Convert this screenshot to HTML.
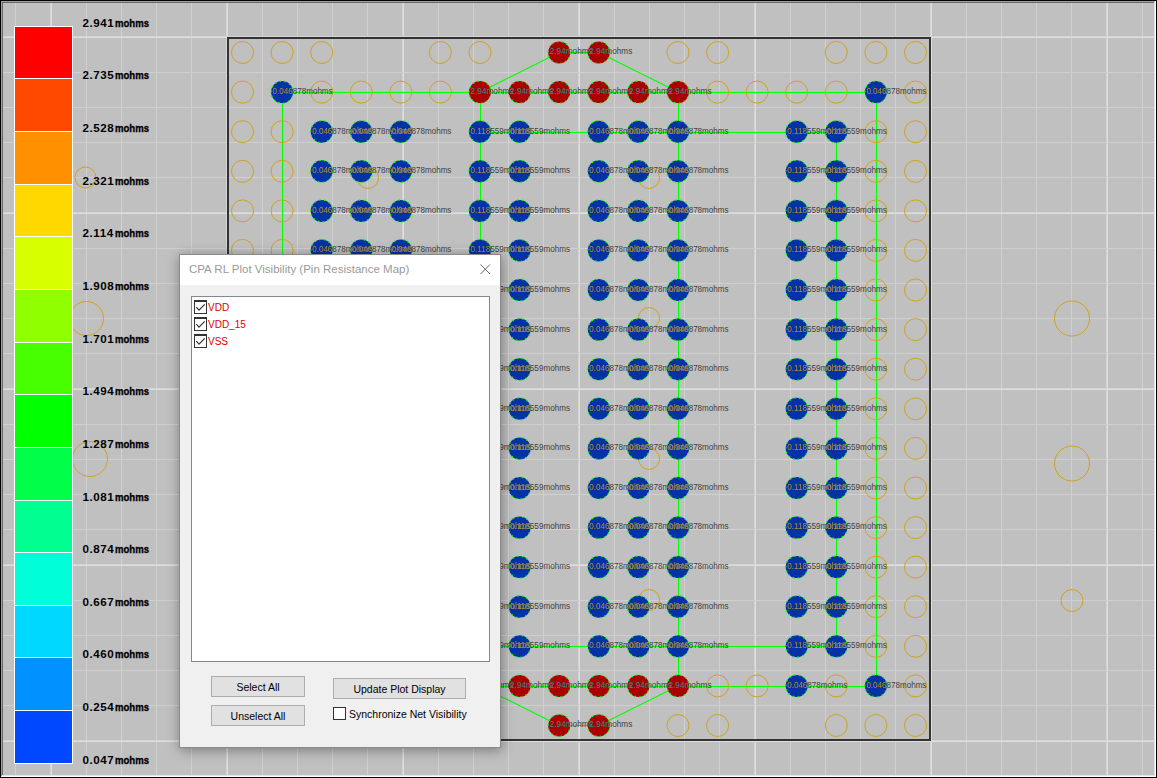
<!DOCTYPE html><html><head><meta charset="utf-8"><style>
html,body{margin:0;padding:0;width:1157px;height:778px;overflow:hidden;background:#c0c0c0}
#dlg{position:absolute;left:179px;top:254px;width:320px;height:492px;border:1px solid #8a8a8a;background:#f0f0f0;box-shadow:1px 2px 12px rgba(0,0,0,0.38);font-family:"Liberation Sans",sans-serif}
#dlg .title{position:absolute;left:0;top:0;width:320px;height:30px;background:#fff;color:#9a9a9a;font-size:11.5px;line-height:28px;padding-left:9px;box-sizing:border-box;white-space:nowrap}
#dlg .x{position:absolute;left:300px;top:9px}
#dlg .list{position:absolute;left:11px;top:41px;width:299px;height:366px;background:#fff;border:1px solid #828790;box-sizing:border-box}
#dlg .item{position:absolute;left:2px;height:14px}
#dlg .cb{position:absolute;left:0;top:0;width:11px;height:11px;border:1px solid #333;border-top-width:2px;background:#fff}
#dlg .cb svg{position:absolute;left:-1px;top:-2px}
#dlg .lbl{position:absolute;left:14px;top:2px;color:#e00000;font-size:10px;white-space:nowrap}
#dlg .btn{position:absolute;background:#e1e1e1;border:1px solid #adadad;font-size:10.5px;color:#000;text-align:center;line-height:20px;white-space:nowrap}
#dlg .cb2{position:absolute;left:153px;top:452px;width:11px;height:11px;border:1px solid #333;background:#fff}
#dlg .sync{position:absolute;left:169px;top:453px;font-size:10.5px;color:#000;white-space:nowrap}
</style></head><body>
<svg width="1157" height="778" viewBox="0 0 1157 778" style="position:absolute;left:0;top:0">
<defs><clipPath id="cb"><circle cx="282.1" cy="92.1" r="11"/><circle cx="875.9" cy="92.1" r="11"/><circle cx="321.7" cy="131.7" r="11"/><circle cx="361.3" cy="131.7" r="11"/><circle cx="400.9" cy="131.7" r="11"/><circle cx="480.0" cy="131.7" r="11"/><circle cx="519.6" cy="131.7" r="11"/><circle cx="598.8" cy="131.7" r="11"/><circle cx="638.4" cy="131.7" r="11"/><circle cx="678.0" cy="131.7" r="11"/><circle cx="796.7" cy="131.7" r="11"/><circle cx="836.3" cy="131.7" r="11"/><circle cx="321.7" cy="171.3" r="11"/><circle cx="361.3" cy="171.3" r="11"/><circle cx="400.9" cy="171.3" r="11"/><circle cx="480.0" cy="171.3" r="11"/><circle cx="519.6" cy="171.3" r="11"/><circle cx="598.8" cy="171.3" r="11"/><circle cx="638.4" cy="171.3" r="11"/><circle cx="678.0" cy="171.3" r="11"/><circle cx="796.7" cy="171.3" r="11"/><circle cx="836.3" cy="171.3" r="11"/><circle cx="321.7" cy="210.9" r="11"/><circle cx="361.3" cy="210.9" r="11"/><circle cx="400.9" cy="210.9" r="11"/><circle cx="480.0" cy="210.9" r="11"/><circle cx="519.6" cy="210.9" r="11"/><circle cx="598.8" cy="210.9" r="11"/><circle cx="638.4" cy="210.9" r="11"/><circle cx="678.0" cy="210.9" r="11"/><circle cx="796.7" cy="210.9" r="11"/><circle cx="836.3" cy="210.9" r="11"/><circle cx="321.7" cy="250.4" r="11"/><circle cx="361.3" cy="250.4" r="11"/><circle cx="400.9" cy="250.4" r="11"/><circle cx="480.0" cy="250.4" r="11"/><circle cx="519.6" cy="250.4" r="11"/><circle cx="598.8" cy="250.4" r="11"/><circle cx="638.4" cy="250.4" r="11"/><circle cx="678.0" cy="250.4" r="11"/><circle cx="796.7" cy="250.4" r="11"/><circle cx="836.3" cy="250.4" r="11"/><circle cx="321.7" cy="290.0" r="11"/><circle cx="361.3" cy="290.0" r="11"/><circle cx="400.9" cy="290.0" r="11"/><circle cx="480.0" cy="290.0" r="11"/><circle cx="519.6" cy="290.0" r="11"/><circle cx="598.8" cy="290.0" r="11"/><circle cx="638.4" cy="290.0" r="11"/><circle cx="678.0" cy="290.0" r="11"/><circle cx="796.7" cy="290.0" r="11"/><circle cx="836.3" cy="290.0" r="11"/><circle cx="321.7" cy="329.6" r="11"/><circle cx="361.3" cy="329.6" r="11"/><circle cx="400.9" cy="329.6" r="11"/><circle cx="480.0" cy="329.6" r="11"/><circle cx="519.6" cy="329.6" r="11"/><circle cx="598.8" cy="329.6" r="11"/><circle cx="638.4" cy="329.6" r="11"/><circle cx="678.0" cy="329.6" r="11"/><circle cx="796.7" cy="329.6" r="11"/><circle cx="836.3" cy="329.6" r="11"/><circle cx="321.7" cy="369.2" r="11"/><circle cx="361.3" cy="369.2" r="11"/><circle cx="400.9" cy="369.2" r="11"/><circle cx="480.0" cy="369.2" r="11"/><circle cx="519.6" cy="369.2" r="11"/><circle cx="598.8" cy="369.2" r="11"/><circle cx="638.4" cy="369.2" r="11"/><circle cx="678.0" cy="369.2" r="11"/><circle cx="796.7" cy="369.2" r="11"/><circle cx="836.3" cy="369.2" r="11"/><circle cx="321.7" cy="408.8" r="11"/><circle cx="361.3" cy="408.8" r="11"/><circle cx="400.9" cy="408.8" r="11"/><circle cx="480.0" cy="408.8" r="11"/><circle cx="519.6" cy="408.8" r="11"/><circle cx="598.8" cy="408.8" r="11"/><circle cx="638.4" cy="408.8" r="11"/><circle cx="678.0" cy="408.8" r="11"/><circle cx="796.7" cy="408.8" r="11"/><circle cx="836.3" cy="408.8" r="11"/><circle cx="321.7" cy="448.4" r="11"/><circle cx="361.3" cy="448.4" r="11"/><circle cx="400.9" cy="448.4" r="11"/><circle cx="480.0" cy="448.4" r="11"/><circle cx="519.6" cy="448.4" r="11"/><circle cx="598.8" cy="448.4" r="11"/><circle cx="638.4" cy="448.4" r="11"/><circle cx="678.0" cy="448.4" r="11"/><circle cx="796.7" cy="448.4" r="11"/><circle cx="836.3" cy="448.4" r="11"/><circle cx="321.7" cy="488.0" r="11"/><circle cx="361.3" cy="488.0" r="11"/><circle cx="400.9" cy="488.0" r="11"/><circle cx="480.0" cy="488.0" r="11"/><circle cx="519.6" cy="488.0" r="11"/><circle cx="598.8" cy="488.0" r="11"/><circle cx="638.4" cy="488.0" r="11"/><circle cx="678.0" cy="488.0" r="11"/><circle cx="796.7" cy="488.0" r="11"/><circle cx="836.3" cy="488.0" r="11"/><circle cx="321.7" cy="527.6" r="11"/><circle cx="361.3" cy="527.6" r="11"/><circle cx="400.9" cy="527.6" r="11"/><circle cx="480.0" cy="527.6" r="11"/><circle cx="519.6" cy="527.6" r="11"/><circle cx="598.8" cy="527.6" r="11"/><circle cx="638.4" cy="527.6" r="11"/><circle cx="678.0" cy="527.6" r="11"/><circle cx="796.7" cy="527.6" r="11"/><circle cx="836.3" cy="527.6" r="11"/><circle cx="321.7" cy="567.1" r="11"/><circle cx="361.3" cy="567.1" r="11"/><circle cx="400.9" cy="567.1" r="11"/><circle cx="480.0" cy="567.1" r="11"/><circle cx="519.6" cy="567.1" r="11"/><circle cx="598.8" cy="567.1" r="11"/><circle cx="638.4" cy="567.1" r="11"/><circle cx="678.0" cy="567.1" r="11"/><circle cx="796.7" cy="567.1" r="11"/><circle cx="836.3" cy="567.1" r="11"/><circle cx="321.7" cy="606.7" r="11"/><circle cx="361.3" cy="606.7" r="11"/><circle cx="400.9" cy="606.7" r="11"/><circle cx="480.0" cy="606.7" r="11"/><circle cx="519.6" cy="606.7" r="11"/><circle cx="598.8" cy="606.7" r="11"/><circle cx="638.4" cy="606.7" r="11"/><circle cx="678.0" cy="606.7" r="11"/><circle cx="796.7" cy="606.7" r="11"/><circle cx="836.3" cy="606.7" r="11"/><circle cx="321.7" cy="646.3" r="11"/><circle cx="361.3" cy="646.3" r="11"/><circle cx="400.9" cy="646.3" r="11"/><circle cx="480.0" cy="646.3" r="11"/><circle cx="519.6" cy="646.3" r="11"/><circle cx="598.8" cy="646.3" r="11"/><circle cx="638.4" cy="646.3" r="11"/><circle cx="678.0" cy="646.3" r="11"/><circle cx="796.7" cy="646.3" r="11"/><circle cx="836.3" cy="646.3" r="11"/><circle cx="282.1" cy="685.9" r="11"/><circle cx="796.7" cy="685.9" r="11"/><circle cx="875.9" cy="685.9" r="11"/></clipPath><clipPath id="cr"><circle cx="559.2" cy="52.5" r="11"/><circle cx="598.8" cy="52.5" r="11"/><circle cx="480.0" cy="92.1" r="11"/><circle cx="519.6" cy="92.1" r="11"/><circle cx="559.2" cy="92.1" r="11"/><circle cx="598.8" cy="92.1" r="11"/><circle cx="638.4" cy="92.1" r="11"/><circle cx="678.0" cy="92.1" r="11"/><circle cx="480.0" cy="685.9" r="11"/><circle cx="519.6" cy="685.9" r="11"/><circle cx="559.2" cy="685.9" r="11"/><circle cx="598.8" cy="685.9" r="11"/><circle cx="638.4" cy="685.9" r="11"/><circle cx="678.0" cy="685.9" r="11"/><circle cx="559.2" cy="725.5" r="11"/><circle cx="598.8" cy="725.5" r="11"/></clipPath></defs>
<rect x="0" y="0" width="1157" height="778" fill="#c0c0c0"/>
<g shape-rendering="crispEdges"><rect x="15" y="3" width="1" height="772" fill="#d0d0d0"/><rect x="50" y="3" width="1" height="772" fill="#d4d4d4"/><rect x="51" y="3" width="1" height="772" fill="#dedede"/><rect x="86" y="3" width="1" height="772" fill="#d0d0d0"/><rect x="121" y="3" width="1" height="772" fill="#d0d0d0"/><rect x="156" y="3" width="1" height="772" fill="#d0d0d0"/><rect x="191" y="3" width="1" height="772" fill="#d0d0d0"/><rect x="226" y="3" width="1" height="772" fill="#d4d4d4"/><rect x="227" y="3" width="1" height="772" fill="#dedede"/><rect x="262" y="3" width="1" height="772" fill="#d0d0d0"/><rect x="297" y="3" width="1" height="772" fill="#d0d0d0"/><rect x="332" y="3" width="1" height="772" fill="#d0d0d0"/><rect x="367" y="3" width="1" height="772" fill="#d0d0d0"/><rect x="402" y="3" width="1" height="772" fill="#d4d4d4"/><rect x="403" y="3" width="1" height="772" fill="#dedede"/><rect x="438" y="3" width="1" height="772" fill="#d0d0d0"/><rect x="473" y="3" width="1" height="772" fill="#d0d0d0"/><rect x="508" y="3" width="1" height="772" fill="#d0d0d0"/><rect x="543" y="3" width="1" height="772" fill="#d0d0d0"/><rect x="578" y="3" width="1" height="772" fill="#d4d4d4"/><rect x="579" y="3" width="1" height="772" fill="#dedede"/><rect x="614" y="3" width="1" height="772" fill="#d0d0d0"/><rect x="649" y="3" width="1" height="772" fill="#d0d0d0"/><rect x="684" y="3" width="1" height="772" fill="#d0d0d0"/><rect x="719" y="3" width="1" height="772" fill="#d0d0d0"/><rect x="754" y="3" width="1" height="772" fill="#d4d4d4"/><rect x="755" y="3" width="1" height="772" fill="#dedede"/><rect x="790" y="3" width="1" height="772" fill="#d0d0d0"/><rect x="825" y="3" width="1" height="772" fill="#d0d0d0"/><rect x="860" y="3" width="1" height="772" fill="#d0d0d0"/><rect x="895" y="3" width="1" height="772" fill="#d0d0d0"/><rect x="930" y="3" width="1" height="772" fill="#d4d4d4"/><rect x="931" y="3" width="1" height="772" fill="#dedede"/><rect x="966" y="3" width="1" height="772" fill="#d0d0d0"/><rect x="1001" y="3" width="1" height="772" fill="#d0d0d0"/><rect x="1036" y="3" width="1" height="772" fill="#d0d0d0"/><rect x="1071" y="3" width="1" height="772" fill="#d0d0d0"/><rect x="1106" y="3" width="1" height="772" fill="#d4d4d4"/><rect x="1107" y="3" width="1" height="772" fill="#dedede"/><rect x="1142" y="3" width="1" height="772" fill="#d0d0d0"/><rect x="3" y="36" width="1151" height="1" fill="#d4d4d4"/><rect x="3" y="37" width="1151" height="1" fill="#dedede"/><rect x="3" y="72" width="1151" height="1" fill="#d0d0d0"/><rect x="3" y="107" width="1151" height="1" fill="#d0d0d0"/><rect x="3" y="142" width="1151" height="1" fill="#d0d0d0"/><rect x="3" y="177" width="1151" height="1" fill="#d0d0d0"/><rect x="3" y="212" width="1151" height="1" fill="#d4d4d4"/><rect x="3" y="213" width="1151" height="1" fill="#dedede"/><rect x="3" y="248" width="1151" height="1" fill="#d0d0d0"/><rect x="3" y="283" width="1151" height="1" fill="#d0d0d0"/><rect x="3" y="318" width="1151" height="1" fill="#d0d0d0"/><rect x="3" y="353" width="1151" height="1" fill="#d0d0d0"/><rect x="3" y="388" width="1151" height="1" fill="#d4d4d4"/><rect x="3" y="389" width="1151" height="1" fill="#dedede"/><rect x="3" y="424" width="1151" height="1" fill="#d0d0d0"/><rect x="3" y="459" width="1151" height="1" fill="#d0d0d0"/><rect x="3" y="494" width="1151" height="1" fill="#d0d0d0"/><rect x="3" y="529" width="1151" height="1" fill="#d0d0d0"/><rect x="3" y="564" width="1151" height="1" fill="#d4d4d4"/><rect x="3" y="565" width="1151" height="1" fill="#dedede"/><rect x="3" y="600" width="1151" height="1" fill="#d0d0d0"/><rect x="3" y="635" width="1151" height="1" fill="#d0d0d0"/><rect x="3" y="670" width="1151" height="1" fill="#d0d0d0"/><rect x="3" y="705" width="1151" height="1" fill="#d0d0d0"/><rect x="3" y="740" width="1151" height="1" fill="#d4d4d4"/><rect x="3" y="741" width="1151" height="1" fill="#dedede"/></g>
<g><circle cx="85.5" cy="177.5" r="10.5" fill="none" stroke="#cfa31f" stroke-width="1"/><circle cx="86.5" cy="318.5" r="17" fill="none" stroke="#cfa31f" stroke-width="1"/><circle cx="90" cy="459" r="17.5" fill="none" stroke="#cfa31f" stroke-width="1"/><circle cx="1072" cy="318.5" r="17.5" fill="none" stroke="#cfa31f" stroke-width="1"/><circle cx="1072" cy="463.5" r="17.5" fill="none" stroke="#cfa31f" stroke-width="1"/><circle cx="1072" cy="600.5" r="11" fill="none" stroke="#cfa31f" stroke-width="1"/><circle cx="368" cy="178" r="10.5" fill="none" stroke="#cfa31f" stroke-width="1"/><circle cx="649" cy="178" r="10.5" fill="none" stroke="#cfa31f" stroke-width="1"/><circle cx="649" cy="318" r="10.5" fill="none" stroke="#cfa31f" stroke-width="1"/><circle cx="649" cy="459" r="10.5" fill="none" stroke="#cfa31f" stroke-width="1"/><circle cx="649" cy="600" r="10.5" fill="none" stroke="#cfa31f" stroke-width="1"/></g>
<rect x="228" y="38" width="702" height="702" fill="none" stroke="#333333" stroke-width="2" shape-rendering="crispEdges"/>
<g><rect x="282" y="92" width="595" height="1" fill="#00ff00"/><line x1="480.0" y1="92.1" x2="559.2" y2="52.5" stroke="#00ff00" stroke-width="1.1"/><rect x="559" y="52" width="41" height="1" fill="#00ff00"/><line x1="598.8" y1="52.5" x2="678.0" y2="92.1" stroke="#00ff00" stroke-width="1.1"/><rect x="282" y="92" width="1" height="595" fill="#00ff00"/><rect x="480" y="92" width="1" height="595" fill="#00ff00"/><rect x="678" y="92" width="1" height="595" fill="#00ff00"/><rect x="876" y="92" width="1" height="595" fill="#00ff00"/><rect x="836" y="132" width="1" height="515" fill="#00ff00"/><rect x="480" y="132" width="357" height="1" fill="#00ff00"/><rect x="480" y="646" width="357" height="1" fill="#00ff00"/><rect x="282" y="686" width="595" height="1" fill="#00ff00"/><line x1="480.0" y1="685.9" x2="559.2" y2="725.5" stroke="#00ff00" stroke-width="1.1"/><rect x="559" y="725" width="41" height="1" fill="#00ff00"/><line x1="598.8" y1="725.5" x2="678.0" y2="685.9" stroke="#00ff00" stroke-width="1.1"/></g>
<g><circle cx="242.5" cy="52.5" r="11" fill="none" stroke="#cfa31f" stroke-width="1"/><circle cx="282.1" cy="52.5" r="11" fill="none" stroke="#cfa31f" stroke-width="1"/><circle cx="321.7" cy="52.5" r="11" fill="none" stroke="#cfa31f" stroke-width="1"/><circle cx="440.4" cy="52.5" r="11" fill="none" stroke="#cfa31f" stroke-width="1"/><circle cx="480.0" cy="52.5" r="11" fill="none" stroke="#cfa31f" stroke-width="1"/><circle cx="678.0" cy="52.5" r="11" fill="none" stroke="#cfa31f" stroke-width="1"/><circle cx="717.6" cy="52.5" r="11" fill="none" stroke="#cfa31f" stroke-width="1"/><circle cx="836.3" cy="52.5" r="11" fill="none" stroke="#cfa31f" stroke-width="1"/><circle cx="875.9" cy="52.5" r="11" fill="none" stroke="#cfa31f" stroke-width="1"/><circle cx="915.5" cy="52.5" r="11" fill="none" stroke="#cfa31f" stroke-width="1"/><circle cx="242.5" cy="92.1" r="11" fill="none" stroke="#cfa31f" stroke-width="1"/><circle cx="321.7" cy="92.1" r="11" fill="none" stroke="#cfa31f" stroke-width="1"/><circle cx="361.3" cy="92.1" r="11" fill="none" stroke="#cfa31f" stroke-width="1"/><circle cx="400.9" cy="92.1" r="11" fill="none" stroke="#cfa31f" stroke-width="1"/><circle cx="440.4" cy="92.1" r="11" fill="none" stroke="#cfa31f" stroke-width="1"/><circle cx="717.6" cy="92.1" r="11" fill="none" stroke="#cfa31f" stroke-width="1"/><circle cx="757.1" cy="92.1" r="11" fill="none" stroke="#cfa31f" stroke-width="1"/><circle cx="796.7" cy="92.1" r="11" fill="none" stroke="#cfa31f" stroke-width="1"/><circle cx="836.3" cy="92.1" r="11" fill="none" stroke="#cfa31f" stroke-width="1"/><circle cx="915.5" cy="92.1" r="11" fill="none" stroke="#cfa31f" stroke-width="1"/><circle cx="242.5" cy="131.7" r="11" fill="none" stroke="#cfa31f" stroke-width="1"/><circle cx="282.1" cy="131.7" r="11" fill="none" stroke="#cfa31f" stroke-width="1"/><circle cx="875.9" cy="131.7" r="11" fill="none" stroke="#cfa31f" stroke-width="1"/><circle cx="915.5" cy="131.7" r="11" fill="none" stroke="#cfa31f" stroke-width="1"/><circle cx="242.5" cy="171.3" r="11" fill="none" stroke="#cfa31f" stroke-width="1"/><circle cx="282.1" cy="171.3" r="11" fill="none" stroke="#cfa31f" stroke-width="1"/><circle cx="875.9" cy="171.3" r="11" fill="none" stroke="#cfa31f" stroke-width="1"/><circle cx="915.5" cy="171.3" r="11" fill="none" stroke="#cfa31f" stroke-width="1"/><circle cx="242.5" cy="210.9" r="11" fill="none" stroke="#cfa31f" stroke-width="1"/><circle cx="282.1" cy="210.9" r="11" fill="none" stroke="#cfa31f" stroke-width="1"/><circle cx="875.9" cy="210.9" r="11" fill="none" stroke="#cfa31f" stroke-width="1"/><circle cx="915.5" cy="210.9" r="11" fill="none" stroke="#cfa31f" stroke-width="1"/><circle cx="242.5" cy="250.4" r="11" fill="none" stroke="#cfa31f" stroke-width="1"/><circle cx="282.1" cy="250.4" r="11" fill="none" stroke="#cfa31f" stroke-width="1"/><circle cx="875.9" cy="250.4" r="11" fill="none" stroke="#cfa31f" stroke-width="1"/><circle cx="915.5" cy="250.4" r="11" fill="none" stroke="#cfa31f" stroke-width="1"/><circle cx="242.5" cy="290.0" r="11" fill="none" stroke="#cfa31f" stroke-width="1"/><circle cx="282.1" cy="290.0" r="11" fill="none" stroke="#cfa31f" stroke-width="1"/><circle cx="875.9" cy="290.0" r="11" fill="none" stroke="#cfa31f" stroke-width="1"/><circle cx="915.5" cy="290.0" r="11" fill="none" stroke="#cfa31f" stroke-width="1"/><circle cx="242.5" cy="329.6" r="11" fill="none" stroke="#cfa31f" stroke-width="1"/><circle cx="282.1" cy="329.6" r="11" fill="none" stroke="#cfa31f" stroke-width="1"/><circle cx="875.9" cy="329.6" r="11" fill="none" stroke="#cfa31f" stroke-width="1"/><circle cx="915.5" cy="329.6" r="11" fill="none" stroke="#cfa31f" stroke-width="1"/><circle cx="242.5" cy="369.2" r="11" fill="none" stroke="#cfa31f" stroke-width="1"/><circle cx="282.1" cy="369.2" r="11" fill="none" stroke="#cfa31f" stroke-width="1"/><circle cx="875.9" cy="369.2" r="11" fill="none" stroke="#cfa31f" stroke-width="1"/><circle cx="915.5" cy="369.2" r="11" fill="none" stroke="#cfa31f" stroke-width="1"/><circle cx="242.5" cy="408.8" r="11" fill="none" stroke="#cfa31f" stroke-width="1"/><circle cx="282.1" cy="408.8" r="11" fill="none" stroke="#cfa31f" stroke-width="1"/><circle cx="875.9" cy="408.8" r="11" fill="none" stroke="#cfa31f" stroke-width="1"/><circle cx="915.5" cy="408.8" r="11" fill="none" stroke="#cfa31f" stroke-width="1"/><circle cx="242.5" cy="448.4" r="11" fill="none" stroke="#cfa31f" stroke-width="1"/><circle cx="282.1" cy="448.4" r="11" fill="none" stroke="#cfa31f" stroke-width="1"/><circle cx="875.9" cy="448.4" r="11" fill="none" stroke="#cfa31f" stroke-width="1"/><circle cx="915.5" cy="448.4" r="11" fill="none" stroke="#cfa31f" stroke-width="1"/><circle cx="242.5" cy="488.0" r="11" fill="none" stroke="#cfa31f" stroke-width="1"/><circle cx="282.1" cy="488.0" r="11" fill="none" stroke="#cfa31f" stroke-width="1"/><circle cx="875.9" cy="488.0" r="11" fill="none" stroke="#cfa31f" stroke-width="1"/><circle cx="915.5" cy="488.0" r="11" fill="none" stroke="#cfa31f" stroke-width="1"/><circle cx="242.5" cy="527.6" r="11" fill="none" stroke="#cfa31f" stroke-width="1"/><circle cx="282.1" cy="527.6" r="11" fill="none" stroke="#cfa31f" stroke-width="1"/><circle cx="875.9" cy="527.6" r="11" fill="none" stroke="#cfa31f" stroke-width="1"/><circle cx="915.5" cy="527.6" r="11" fill="none" stroke="#cfa31f" stroke-width="1"/><circle cx="242.5" cy="567.1" r="11" fill="none" stroke="#cfa31f" stroke-width="1"/><circle cx="282.1" cy="567.1" r="11" fill="none" stroke="#cfa31f" stroke-width="1"/><circle cx="875.9" cy="567.1" r="11" fill="none" stroke="#cfa31f" stroke-width="1"/><circle cx="915.5" cy="567.1" r="11" fill="none" stroke="#cfa31f" stroke-width="1"/><circle cx="242.5" cy="606.7" r="11" fill="none" stroke="#cfa31f" stroke-width="1"/><circle cx="282.1" cy="606.7" r="11" fill="none" stroke="#cfa31f" stroke-width="1"/><circle cx="875.9" cy="606.7" r="11" fill="none" stroke="#cfa31f" stroke-width="1"/><circle cx="915.5" cy="606.7" r="11" fill="none" stroke="#cfa31f" stroke-width="1"/><circle cx="242.5" cy="646.3" r="11" fill="none" stroke="#cfa31f" stroke-width="1"/><circle cx="282.1" cy="646.3" r="11" fill="none" stroke="#cfa31f" stroke-width="1"/><circle cx="875.9" cy="646.3" r="11" fill="none" stroke="#cfa31f" stroke-width="1"/><circle cx="915.5" cy="646.3" r="11" fill="none" stroke="#cfa31f" stroke-width="1"/><circle cx="242.5" cy="685.9" r="11" fill="none" stroke="#cfa31f" stroke-width="1"/><circle cx="321.7" cy="685.9" r="11" fill="none" stroke="#cfa31f" stroke-width="1"/><circle cx="361.3" cy="685.9" r="11" fill="none" stroke="#cfa31f" stroke-width="1"/><circle cx="400.9" cy="685.9" r="11" fill="none" stroke="#cfa31f" stroke-width="1"/><circle cx="440.4" cy="685.9" r="11" fill="none" stroke="#cfa31f" stroke-width="1"/><circle cx="717.6" cy="685.9" r="11" fill="none" stroke="#cfa31f" stroke-width="1"/><circle cx="757.1" cy="685.9" r="11" fill="none" stroke="#cfa31f" stroke-width="1"/><circle cx="836.3" cy="685.9" r="11" fill="none" stroke="#cfa31f" stroke-width="1"/><circle cx="915.5" cy="685.9" r="11" fill="none" stroke="#cfa31f" stroke-width="1"/><circle cx="242.5" cy="725.5" r="11" fill="none" stroke="#cfa31f" stroke-width="1"/><circle cx="282.1" cy="725.5" r="11" fill="none" stroke="#cfa31f" stroke-width="1"/><circle cx="321.7" cy="725.5" r="11" fill="none" stroke="#cfa31f" stroke-width="1"/><circle cx="440.4" cy="725.5" r="11" fill="none" stroke="#cfa31f" stroke-width="1"/><circle cx="480.0" cy="725.5" r="11" fill="none" stroke="#cfa31f" stroke-width="1"/><circle cx="678.0" cy="725.5" r="11" fill="none" stroke="#cfa31f" stroke-width="1"/><circle cx="717.6" cy="725.5" r="11" fill="none" stroke="#cfa31f" stroke-width="1"/><circle cx="836.3" cy="725.5" r="11" fill="none" stroke="#cfa31f" stroke-width="1"/><circle cx="875.9" cy="725.5" r="11" fill="none" stroke="#cfa31f" stroke-width="1"/><circle cx="915.5" cy="725.5" r="11" fill="none" stroke="#cfa31f" stroke-width="1"/></g>
<g><circle cx="559.2" cy="52.5" r="11" fill="#aa0000" stroke="#00ff00" stroke-width="1.3" stroke-dasharray="1.5 3.4"/><circle cx="598.8" cy="52.5" r="11" fill="#aa0000" stroke="#00ff00" stroke-width="1.3" stroke-dasharray="1.5 3.4"/><circle cx="282.1" cy="92.1" r="11" fill="#0332a6" stroke="#00ff00" stroke-width="1.3" stroke-dasharray="1.5 3.4"/><circle cx="480.0" cy="92.1" r="11" fill="#aa0000" stroke="#00ff00" stroke-width="1.3" stroke-dasharray="1.5 3.4"/><circle cx="519.6" cy="92.1" r="11" fill="#aa0000" stroke="#00ff00" stroke-width="1.3" stroke-dasharray="1.5 3.4"/><circle cx="559.2" cy="92.1" r="11" fill="#aa0000" stroke="#00ff00" stroke-width="1.3" stroke-dasharray="1.5 3.4"/><circle cx="598.8" cy="92.1" r="11" fill="#aa0000" stroke="#00ff00" stroke-width="1.3" stroke-dasharray="1.5 3.4"/><circle cx="638.4" cy="92.1" r="11" fill="#aa0000" stroke="#00ff00" stroke-width="1.3" stroke-dasharray="1.5 3.4"/><circle cx="678.0" cy="92.1" r="11" fill="#aa0000" stroke="#00ff00" stroke-width="1.3" stroke-dasharray="1.5 3.4"/><circle cx="875.9" cy="92.1" r="11" fill="#0332a6" stroke="#00ff00" stroke-width="1.3" stroke-dasharray="1.5 3.4"/><circle cx="321.7" cy="131.7" r="11" fill="#0332a6" stroke="#00ff00" stroke-width="1.3" stroke-dasharray="1.5 3.4"/><circle cx="361.3" cy="131.7" r="11" fill="#0332a6" stroke="#00ff00" stroke-width="1.3" stroke-dasharray="1.5 3.4"/><circle cx="400.9" cy="131.7" r="11" fill="#0332a6" stroke="#00ff00" stroke-width="1.3" stroke-dasharray="1.5 3.4"/><circle cx="480.0" cy="131.7" r="11" fill="#0332a6" stroke="#00ff00" stroke-width="1.3" stroke-dasharray="1.5 3.4"/><circle cx="519.6" cy="131.7" r="11" fill="#0332a6" stroke="#00ff00" stroke-width="1.3" stroke-dasharray="1.5 3.4"/><circle cx="598.8" cy="131.7" r="11" fill="#0332a6" stroke="#00ff00" stroke-width="1.3" stroke-dasharray="1.5 3.4"/><circle cx="638.4" cy="131.7" r="11" fill="#0332a6" stroke="#00ff00" stroke-width="1.3" stroke-dasharray="1.5 3.4"/><circle cx="678.0" cy="131.7" r="11" fill="#0332a6" stroke="#00ff00" stroke-width="1.3" stroke-dasharray="1.5 3.4"/><circle cx="796.7" cy="131.7" r="11" fill="#0332a6" stroke="#00ff00" stroke-width="1.3" stroke-dasharray="1.5 3.4"/><circle cx="836.3" cy="131.7" r="11" fill="#0332a6" stroke="#00ff00" stroke-width="1.3" stroke-dasharray="1.5 3.4"/><circle cx="321.7" cy="171.3" r="11" fill="#0332a6" stroke="#00ff00" stroke-width="1.3" stroke-dasharray="1.5 3.4"/><circle cx="361.3" cy="171.3" r="11" fill="#0332a6" stroke="#00ff00" stroke-width="1.3" stroke-dasharray="1.5 3.4"/><circle cx="400.9" cy="171.3" r="11" fill="#0332a6" stroke="#00ff00" stroke-width="1.3" stroke-dasharray="1.5 3.4"/><circle cx="480.0" cy="171.3" r="11" fill="#0332a6" stroke="#00ff00" stroke-width="1.3" stroke-dasharray="1.5 3.4"/><circle cx="519.6" cy="171.3" r="11" fill="#0332a6" stroke="#00ff00" stroke-width="1.3" stroke-dasharray="1.5 3.4"/><circle cx="598.8" cy="171.3" r="11" fill="#0332a6" stroke="#00ff00" stroke-width="1.3" stroke-dasharray="1.5 3.4"/><circle cx="638.4" cy="171.3" r="11" fill="#0332a6" stroke="#00ff00" stroke-width="1.3" stroke-dasharray="1.5 3.4"/><circle cx="678.0" cy="171.3" r="11" fill="#0332a6" stroke="#00ff00" stroke-width="1.3" stroke-dasharray="1.5 3.4"/><circle cx="796.7" cy="171.3" r="11" fill="#0332a6" stroke="#00ff00" stroke-width="1.3" stroke-dasharray="1.5 3.4"/><circle cx="836.3" cy="171.3" r="11" fill="#0332a6" stroke="#00ff00" stroke-width="1.3" stroke-dasharray="1.5 3.4"/><circle cx="321.7" cy="210.9" r="11" fill="#0332a6" stroke="#00ff00" stroke-width="1.3" stroke-dasharray="1.5 3.4"/><circle cx="361.3" cy="210.9" r="11" fill="#0332a6" stroke="#00ff00" stroke-width="1.3" stroke-dasharray="1.5 3.4"/><circle cx="400.9" cy="210.9" r="11" fill="#0332a6" stroke="#00ff00" stroke-width="1.3" stroke-dasharray="1.5 3.4"/><circle cx="480.0" cy="210.9" r="11" fill="#0332a6" stroke="#00ff00" stroke-width="1.3" stroke-dasharray="1.5 3.4"/><circle cx="519.6" cy="210.9" r="11" fill="#0332a6" stroke="#00ff00" stroke-width="1.3" stroke-dasharray="1.5 3.4"/><circle cx="598.8" cy="210.9" r="11" fill="#0332a6" stroke="#00ff00" stroke-width="1.3" stroke-dasharray="1.5 3.4"/><circle cx="638.4" cy="210.9" r="11" fill="#0332a6" stroke="#00ff00" stroke-width="1.3" stroke-dasharray="1.5 3.4"/><circle cx="678.0" cy="210.9" r="11" fill="#0332a6" stroke="#00ff00" stroke-width="1.3" stroke-dasharray="1.5 3.4"/><circle cx="796.7" cy="210.9" r="11" fill="#0332a6" stroke="#00ff00" stroke-width="1.3" stroke-dasharray="1.5 3.4"/><circle cx="836.3" cy="210.9" r="11" fill="#0332a6" stroke="#00ff00" stroke-width="1.3" stroke-dasharray="1.5 3.4"/><circle cx="321.7" cy="250.4" r="11" fill="#0332a6" stroke="#00ff00" stroke-width="1.3" stroke-dasharray="1.5 3.4"/><circle cx="361.3" cy="250.4" r="11" fill="#0332a6" stroke="#00ff00" stroke-width="1.3" stroke-dasharray="1.5 3.4"/><circle cx="400.9" cy="250.4" r="11" fill="#0332a6" stroke="#00ff00" stroke-width="1.3" stroke-dasharray="1.5 3.4"/><circle cx="480.0" cy="250.4" r="11" fill="#0332a6" stroke="#00ff00" stroke-width="1.3" stroke-dasharray="1.5 3.4"/><circle cx="519.6" cy="250.4" r="11" fill="#0332a6" stroke="#00ff00" stroke-width="1.3" stroke-dasharray="1.5 3.4"/><circle cx="598.8" cy="250.4" r="11" fill="#0332a6" stroke="#00ff00" stroke-width="1.3" stroke-dasharray="1.5 3.4"/><circle cx="638.4" cy="250.4" r="11" fill="#0332a6" stroke="#00ff00" stroke-width="1.3" stroke-dasharray="1.5 3.4"/><circle cx="678.0" cy="250.4" r="11" fill="#0332a6" stroke="#00ff00" stroke-width="1.3" stroke-dasharray="1.5 3.4"/><circle cx="796.7" cy="250.4" r="11" fill="#0332a6" stroke="#00ff00" stroke-width="1.3" stroke-dasharray="1.5 3.4"/><circle cx="836.3" cy="250.4" r="11" fill="#0332a6" stroke="#00ff00" stroke-width="1.3" stroke-dasharray="1.5 3.4"/><circle cx="321.7" cy="290.0" r="11" fill="#0332a6" stroke="#00ff00" stroke-width="1.3" stroke-dasharray="1.5 3.4"/><circle cx="361.3" cy="290.0" r="11" fill="#0332a6" stroke="#00ff00" stroke-width="1.3" stroke-dasharray="1.5 3.4"/><circle cx="400.9" cy="290.0" r="11" fill="#0332a6" stroke="#00ff00" stroke-width="1.3" stroke-dasharray="1.5 3.4"/><circle cx="480.0" cy="290.0" r="11" fill="#0332a6" stroke="#00ff00" stroke-width="1.3" stroke-dasharray="1.5 3.4"/><circle cx="519.6" cy="290.0" r="11" fill="#0332a6" stroke="#00ff00" stroke-width="1.3" stroke-dasharray="1.5 3.4"/><circle cx="598.8" cy="290.0" r="11" fill="#0332a6" stroke="#00ff00" stroke-width="1.3" stroke-dasharray="1.5 3.4"/><circle cx="638.4" cy="290.0" r="11" fill="#0332a6" stroke="#00ff00" stroke-width="1.3" stroke-dasharray="1.5 3.4"/><circle cx="678.0" cy="290.0" r="11" fill="#0332a6" stroke="#00ff00" stroke-width="1.3" stroke-dasharray="1.5 3.4"/><circle cx="796.7" cy="290.0" r="11" fill="#0332a6" stroke="#00ff00" stroke-width="1.3" stroke-dasharray="1.5 3.4"/><circle cx="836.3" cy="290.0" r="11" fill="#0332a6" stroke="#00ff00" stroke-width="1.3" stroke-dasharray="1.5 3.4"/><circle cx="321.7" cy="329.6" r="11" fill="#0332a6" stroke="#00ff00" stroke-width="1.3" stroke-dasharray="1.5 3.4"/><circle cx="361.3" cy="329.6" r="11" fill="#0332a6" stroke="#00ff00" stroke-width="1.3" stroke-dasharray="1.5 3.4"/><circle cx="400.9" cy="329.6" r="11" fill="#0332a6" stroke="#00ff00" stroke-width="1.3" stroke-dasharray="1.5 3.4"/><circle cx="480.0" cy="329.6" r="11" fill="#0332a6" stroke="#00ff00" stroke-width="1.3" stroke-dasharray="1.5 3.4"/><circle cx="519.6" cy="329.6" r="11" fill="#0332a6" stroke="#00ff00" stroke-width="1.3" stroke-dasharray="1.5 3.4"/><circle cx="598.8" cy="329.6" r="11" fill="#0332a6" stroke="#00ff00" stroke-width="1.3" stroke-dasharray="1.5 3.4"/><circle cx="638.4" cy="329.6" r="11" fill="#0332a6" stroke="#00ff00" stroke-width="1.3" stroke-dasharray="1.5 3.4"/><circle cx="678.0" cy="329.6" r="11" fill="#0332a6" stroke="#00ff00" stroke-width="1.3" stroke-dasharray="1.5 3.4"/><circle cx="796.7" cy="329.6" r="11" fill="#0332a6" stroke="#00ff00" stroke-width="1.3" stroke-dasharray="1.5 3.4"/><circle cx="836.3" cy="329.6" r="11" fill="#0332a6" stroke="#00ff00" stroke-width="1.3" stroke-dasharray="1.5 3.4"/><circle cx="321.7" cy="369.2" r="11" fill="#0332a6" stroke="#00ff00" stroke-width="1.3" stroke-dasharray="1.5 3.4"/><circle cx="361.3" cy="369.2" r="11" fill="#0332a6" stroke="#00ff00" stroke-width="1.3" stroke-dasharray="1.5 3.4"/><circle cx="400.9" cy="369.2" r="11" fill="#0332a6" stroke="#00ff00" stroke-width="1.3" stroke-dasharray="1.5 3.4"/><circle cx="480.0" cy="369.2" r="11" fill="#0332a6" stroke="#00ff00" stroke-width="1.3" stroke-dasharray="1.5 3.4"/><circle cx="519.6" cy="369.2" r="11" fill="#0332a6" stroke="#00ff00" stroke-width="1.3" stroke-dasharray="1.5 3.4"/><circle cx="598.8" cy="369.2" r="11" fill="#0332a6" stroke="#00ff00" stroke-width="1.3" stroke-dasharray="1.5 3.4"/><circle cx="638.4" cy="369.2" r="11" fill="#0332a6" stroke="#00ff00" stroke-width="1.3" stroke-dasharray="1.5 3.4"/><circle cx="678.0" cy="369.2" r="11" fill="#0332a6" stroke="#00ff00" stroke-width="1.3" stroke-dasharray="1.5 3.4"/><circle cx="796.7" cy="369.2" r="11" fill="#0332a6" stroke="#00ff00" stroke-width="1.3" stroke-dasharray="1.5 3.4"/><circle cx="836.3" cy="369.2" r="11" fill="#0332a6" stroke="#00ff00" stroke-width="1.3" stroke-dasharray="1.5 3.4"/><circle cx="321.7" cy="408.8" r="11" fill="#0332a6" stroke="#00ff00" stroke-width="1.3" stroke-dasharray="1.5 3.4"/><circle cx="361.3" cy="408.8" r="11" fill="#0332a6" stroke="#00ff00" stroke-width="1.3" stroke-dasharray="1.5 3.4"/><circle cx="400.9" cy="408.8" r="11" fill="#0332a6" stroke="#00ff00" stroke-width="1.3" stroke-dasharray="1.5 3.4"/><circle cx="480.0" cy="408.8" r="11" fill="#0332a6" stroke="#00ff00" stroke-width="1.3" stroke-dasharray="1.5 3.4"/><circle cx="519.6" cy="408.8" r="11" fill="#0332a6" stroke="#00ff00" stroke-width="1.3" stroke-dasharray="1.5 3.4"/><circle cx="598.8" cy="408.8" r="11" fill="#0332a6" stroke="#00ff00" stroke-width="1.3" stroke-dasharray="1.5 3.4"/><circle cx="638.4" cy="408.8" r="11" fill="#0332a6" stroke="#00ff00" stroke-width="1.3" stroke-dasharray="1.5 3.4"/><circle cx="678.0" cy="408.8" r="11" fill="#0332a6" stroke="#00ff00" stroke-width="1.3" stroke-dasharray="1.5 3.4"/><circle cx="796.7" cy="408.8" r="11" fill="#0332a6" stroke="#00ff00" stroke-width="1.3" stroke-dasharray="1.5 3.4"/><circle cx="836.3" cy="408.8" r="11" fill="#0332a6" stroke="#00ff00" stroke-width="1.3" stroke-dasharray="1.5 3.4"/><circle cx="321.7" cy="448.4" r="11" fill="#0332a6" stroke="#00ff00" stroke-width="1.3" stroke-dasharray="1.5 3.4"/><circle cx="361.3" cy="448.4" r="11" fill="#0332a6" stroke="#00ff00" stroke-width="1.3" stroke-dasharray="1.5 3.4"/><circle cx="400.9" cy="448.4" r="11" fill="#0332a6" stroke="#00ff00" stroke-width="1.3" stroke-dasharray="1.5 3.4"/><circle cx="480.0" cy="448.4" r="11" fill="#0332a6" stroke="#00ff00" stroke-width="1.3" stroke-dasharray="1.5 3.4"/><circle cx="519.6" cy="448.4" r="11" fill="#0332a6" stroke="#00ff00" stroke-width="1.3" stroke-dasharray="1.5 3.4"/><circle cx="598.8" cy="448.4" r="11" fill="#0332a6" stroke="#00ff00" stroke-width="1.3" stroke-dasharray="1.5 3.4"/><circle cx="638.4" cy="448.4" r="11" fill="#0332a6" stroke="#00ff00" stroke-width="1.3" stroke-dasharray="1.5 3.4"/><circle cx="678.0" cy="448.4" r="11" fill="#0332a6" stroke="#00ff00" stroke-width="1.3" stroke-dasharray="1.5 3.4"/><circle cx="796.7" cy="448.4" r="11" fill="#0332a6" stroke="#00ff00" stroke-width="1.3" stroke-dasharray="1.5 3.4"/><circle cx="836.3" cy="448.4" r="11" fill="#0332a6" stroke="#00ff00" stroke-width="1.3" stroke-dasharray="1.5 3.4"/><circle cx="321.7" cy="488.0" r="11" fill="#0332a6" stroke="#00ff00" stroke-width="1.3" stroke-dasharray="1.5 3.4"/><circle cx="361.3" cy="488.0" r="11" fill="#0332a6" stroke="#00ff00" stroke-width="1.3" stroke-dasharray="1.5 3.4"/><circle cx="400.9" cy="488.0" r="11" fill="#0332a6" stroke="#00ff00" stroke-width="1.3" stroke-dasharray="1.5 3.4"/><circle cx="480.0" cy="488.0" r="11" fill="#0332a6" stroke="#00ff00" stroke-width="1.3" stroke-dasharray="1.5 3.4"/><circle cx="519.6" cy="488.0" r="11" fill="#0332a6" stroke="#00ff00" stroke-width="1.3" stroke-dasharray="1.5 3.4"/><circle cx="598.8" cy="488.0" r="11" fill="#0332a6" stroke="#00ff00" stroke-width="1.3" stroke-dasharray="1.5 3.4"/><circle cx="638.4" cy="488.0" r="11" fill="#0332a6" stroke="#00ff00" stroke-width="1.3" stroke-dasharray="1.5 3.4"/><circle cx="678.0" cy="488.0" r="11" fill="#0332a6" stroke="#00ff00" stroke-width="1.3" stroke-dasharray="1.5 3.4"/><circle cx="796.7" cy="488.0" r="11" fill="#0332a6" stroke="#00ff00" stroke-width="1.3" stroke-dasharray="1.5 3.4"/><circle cx="836.3" cy="488.0" r="11" fill="#0332a6" stroke="#00ff00" stroke-width="1.3" stroke-dasharray="1.5 3.4"/><circle cx="321.7" cy="527.6" r="11" fill="#0332a6" stroke="#00ff00" stroke-width="1.3" stroke-dasharray="1.5 3.4"/><circle cx="361.3" cy="527.6" r="11" fill="#0332a6" stroke="#00ff00" stroke-width="1.3" stroke-dasharray="1.5 3.4"/><circle cx="400.9" cy="527.6" r="11" fill="#0332a6" stroke="#00ff00" stroke-width="1.3" stroke-dasharray="1.5 3.4"/><circle cx="480.0" cy="527.6" r="11" fill="#0332a6" stroke="#00ff00" stroke-width="1.3" stroke-dasharray="1.5 3.4"/><circle cx="519.6" cy="527.6" r="11" fill="#0332a6" stroke="#00ff00" stroke-width="1.3" stroke-dasharray="1.5 3.4"/><circle cx="598.8" cy="527.6" r="11" fill="#0332a6" stroke="#00ff00" stroke-width="1.3" stroke-dasharray="1.5 3.4"/><circle cx="638.4" cy="527.6" r="11" fill="#0332a6" stroke="#00ff00" stroke-width="1.3" stroke-dasharray="1.5 3.4"/><circle cx="678.0" cy="527.6" r="11" fill="#0332a6" stroke="#00ff00" stroke-width="1.3" stroke-dasharray="1.5 3.4"/><circle cx="796.7" cy="527.6" r="11" fill="#0332a6" stroke="#00ff00" stroke-width="1.3" stroke-dasharray="1.5 3.4"/><circle cx="836.3" cy="527.6" r="11" fill="#0332a6" stroke="#00ff00" stroke-width="1.3" stroke-dasharray="1.5 3.4"/><circle cx="321.7" cy="567.1" r="11" fill="#0332a6" stroke="#00ff00" stroke-width="1.3" stroke-dasharray="1.5 3.4"/><circle cx="361.3" cy="567.1" r="11" fill="#0332a6" stroke="#00ff00" stroke-width="1.3" stroke-dasharray="1.5 3.4"/><circle cx="400.9" cy="567.1" r="11" fill="#0332a6" stroke="#00ff00" stroke-width="1.3" stroke-dasharray="1.5 3.4"/><circle cx="480.0" cy="567.1" r="11" fill="#0332a6" stroke="#00ff00" stroke-width="1.3" stroke-dasharray="1.5 3.4"/><circle cx="519.6" cy="567.1" r="11" fill="#0332a6" stroke="#00ff00" stroke-width="1.3" stroke-dasharray="1.5 3.4"/><circle cx="598.8" cy="567.1" r="11" fill="#0332a6" stroke="#00ff00" stroke-width="1.3" stroke-dasharray="1.5 3.4"/><circle cx="638.4" cy="567.1" r="11" fill="#0332a6" stroke="#00ff00" stroke-width="1.3" stroke-dasharray="1.5 3.4"/><circle cx="678.0" cy="567.1" r="11" fill="#0332a6" stroke="#00ff00" stroke-width="1.3" stroke-dasharray="1.5 3.4"/><circle cx="796.7" cy="567.1" r="11" fill="#0332a6" stroke="#00ff00" stroke-width="1.3" stroke-dasharray="1.5 3.4"/><circle cx="836.3" cy="567.1" r="11" fill="#0332a6" stroke="#00ff00" stroke-width="1.3" stroke-dasharray="1.5 3.4"/><circle cx="321.7" cy="606.7" r="11" fill="#0332a6" stroke="#00ff00" stroke-width="1.3" stroke-dasharray="1.5 3.4"/><circle cx="361.3" cy="606.7" r="11" fill="#0332a6" stroke="#00ff00" stroke-width="1.3" stroke-dasharray="1.5 3.4"/><circle cx="400.9" cy="606.7" r="11" fill="#0332a6" stroke="#00ff00" stroke-width="1.3" stroke-dasharray="1.5 3.4"/><circle cx="480.0" cy="606.7" r="11" fill="#0332a6" stroke="#00ff00" stroke-width="1.3" stroke-dasharray="1.5 3.4"/><circle cx="519.6" cy="606.7" r="11" fill="#0332a6" stroke="#00ff00" stroke-width="1.3" stroke-dasharray="1.5 3.4"/><circle cx="598.8" cy="606.7" r="11" fill="#0332a6" stroke="#00ff00" stroke-width="1.3" stroke-dasharray="1.5 3.4"/><circle cx="638.4" cy="606.7" r="11" fill="#0332a6" stroke="#00ff00" stroke-width="1.3" stroke-dasharray="1.5 3.4"/><circle cx="678.0" cy="606.7" r="11" fill="#0332a6" stroke="#00ff00" stroke-width="1.3" stroke-dasharray="1.5 3.4"/><circle cx="796.7" cy="606.7" r="11" fill="#0332a6" stroke="#00ff00" stroke-width="1.3" stroke-dasharray="1.5 3.4"/><circle cx="836.3" cy="606.7" r="11" fill="#0332a6" stroke="#00ff00" stroke-width="1.3" stroke-dasharray="1.5 3.4"/><circle cx="321.7" cy="646.3" r="11" fill="#0332a6" stroke="#00ff00" stroke-width="1.3" stroke-dasharray="1.5 3.4"/><circle cx="361.3" cy="646.3" r="11" fill="#0332a6" stroke="#00ff00" stroke-width="1.3" stroke-dasharray="1.5 3.4"/><circle cx="400.9" cy="646.3" r="11" fill="#0332a6" stroke="#00ff00" stroke-width="1.3" stroke-dasharray="1.5 3.4"/><circle cx="480.0" cy="646.3" r="11" fill="#0332a6" stroke="#00ff00" stroke-width="1.3" stroke-dasharray="1.5 3.4"/><circle cx="519.6" cy="646.3" r="11" fill="#0332a6" stroke="#00ff00" stroke-width="1.3" stroke-dasharray="1.5 3.4"/><circle cx="598.8" cy="646.3" r="11" fill="#0332a6" stroke="#00ff00" stroke-width="1.3" stroke-dasharray="1.5 3.4"/><circle cx="638.4" cy="646.3" r="11" fill="#0332a6" stroke="#00ff00" stroke-width="1.3" stroke-dasharray="1.5 3.4"/><circle cx="678.0" cy="646.3" r="11" fill="#0332a6" stroke="#00ff00" stroke-width="1.3" stroke-dasharray="1.5 3.4"/><circle cx="796.7" cy="646.3" r="11" fill="#0332a6" stroke="#00ff00" stroke-width="1.3" stroke-dasharray="1.5 3.4"/><circle cx="836.3" cy="646.3" r="11" fill="#0332a6" stroke="#00ff00" stroke-width="1.3" stroke-dasharray="1.5 3.4"/><circle cx="282.1" cy="685.9" r="11" fill="#0332a6" stroke="#00ff00" stroke-width="1.3" stroke-dasharray="1.5 3.4"/><circle cx="480.0" cy="685.9" r="11" fill="#aa0000" stroke="#00ff00" stroke-width="1.3" stroke-dasharray="1.5 3.4"/><circle cx="519.6" cy="685.9" r="11" fill="#aa0000" stroke="#00ff00" stroke-width="1.3" stroke-dasharray="1.5 3.4"/><circle cx="559.2" cy="685.9" r="11" fill="#aa0000" stroke="#00ff00" stroke-width="1.3" stroke-dasharray="1.5 3.4"/><circle cx="598.8" cy="685.9" r="11" fill="#aa0000" stroke="#00ff00" stroke-width="1.3" stroke-dasharray="1.5 3.4"/><circle cx="638.4" cy="685.9" r="11" fill="#aa0000" stroke="#00ff00" stroke-width="1.3" stroke-dasharray="1.5 3.4"/><circle cx="678.0" cy="685.9" r="11" fill="#aa0000" stroke="#00ff00" stroke-width="1.3" stroke-dasharray="1.5 3.4"/><circle cx="796.7" cy="685.9" r="11" fill="#0332a6" stroke="#00ff00" stroke-width="1.3" stroke-dasharray="1.5 3.4"/><circle cx="875.9" cy="685.9" r="11" fill="#0332a6" stroke="#00ff00" stroke-width="1.3" stroke-dasharray="1.5 3.4"/><circle cx="559.2" cy="725.5" r="11" fill="#aa0000" stroke="#00ff00" stroke-width="1.3" stroke-dasharray="1.5 3.4"/><circle cx="598.8" cy="725.5" r="11" fill="#aa0000" stroke="#00ff00" stroke-width="1.3" stroke-dasharray="1.5 3.4"/></g>
<g font-family="Liberation Sans, sans-serif" font-size="8.7" fill="#404040"><text x="549.7" y="54.0" textLength="43" lengthAdjust="spacingAndGlyphs">2.94mohms</text><text x="589.3" y="54.0" textLength="43" lengthAdjust="spacingAndGlyphs">2.94mohms</text><text x="272.6" y="94.0" textLength="60" lengthAdjust="spacingAndGlyphs">0.046878mohms</text><text x="470.5" y="94.0" textLength="43" lengthAdjust="spacingAndGlyphs">2.94mohms</text><text x="510.1" y="94.0" textLength="43" lengthAdjust="spacingAndGlyphs">2.94mohms</text><text x="549.7" y="94.0" textLength="43" lengthAdjust="spacingAndGlyphs">2.94mohms</text><text x="589.3" y="94.0" textLength="43" lengthAdjust="spacingAndGlyphs">2.94mohms</text><text x="628.9" y="94.0" textLength="43" lengthAdjust="spacingAndGlyphs">2.94mohms</text><text x="668.5" y="94.0" textLength="43" lengthAdjust="spacingAndGlyphs">2.94mohms</text><text x="866.4" y="94.0" textLength="60" lengthAdjust="spacingAndGlyphs">0.046878mohms</text><text x="312.2" y="134.0" textLength="60" lengthAdjust="spacingAndGlyphs">0.046878mohms</text><text x="351.8" y="134.0" textLength="60" lengthAdjust="spacingAndGlyphs">0.046878mohms</text><text x="391.4" y="134.0" textLength="60" lengthAdjust="spacingAndGlyphs">0.046878mohms</text><text x="470.5" y="134.0" textLength="60" lengthAdjust="spacingAndGlyphs">0.118559mohms</text><text x="510.1" y="134.0" textLength="60" lengthAdjust="spacingAndGlyphs">0.118559mohms</text><text x="589.3" y="134.0" textLength="60" lengthAdjust="spacingAndGlyphs">0.046878mohms</text><text x="628.9" y="134.0" textLength="60" lengthAdjust="spacingAndGlyphs">0.046878mohms</text><text x="668.5" y="134.0" textLength="60" lengthAdjust="spacingAndGlyphs">0.046878mohms</text><text x="787.2" y="134.0" textLength="60" lengthAdjust="spacingAndGlyphs">0.118559mohms</text><text x="826.8" y="134.0" textLength="60" lengthAdjust="spacingAndGlyphs">0.118559mohms</text><text x="312.2" y="173.0" textLength="60" lengthAdjust="spacingAndGlyphs">0.046878mohms</text><text x="351.8" y="173.0" textLength="60" lengthAdjust="spacingAndGlyphs">0.046878mohms</text><text x="391.4" y="173.0" textLength="60" lengthAdjust="spacingAndGlyphs">0.046878mohms</text><text x="470.5" y="173.0" textLength="60" lengthAdjust="spacingAndGlyphs">0.118559mohms</text><text x="510.1" y="173.0" textLength="60" lengthAdjust="spacingAndGlyphs">0.118559mohms</text><text x="589.3" y="173.0" textLength="60" lengthAdjust="spacingAndGlyphs">0.046878mohms</text><text x="628.9" y="173.0" textLength="60" lengthAdjust="spacingAndGlyphs">0.046878mohms</text><text x="668.5" y="173.0" textLength="60" lengthAdjust="spacingAndGlyphs">0.046878mohms</text><text x="787.2" y="173.0" textLength="60" lengthAdjust="spacingAndGlyphs">0.118559mohms</text><text x="826.8" y="173.0" textLength="60" lengthAdjust="spacingAndGlyphs">0.118559mohms</text><text x="312.2" y="213.0" textLength="60" lengthAdjust="spacingAndGlyphs">0.046878mohms</text><text x="351.8" y="213.0" textLength="60" lengthAdjust="spacingAndGlyphs">0.046878mohms</text><text x="391.4" y="213.0" textLength="60" lengthAdjust="spacingAndGlyphs">0.046878mohms</text><text x="470.5" y="213.0" textLength="60" lengthAdjust="spacingAndGlyphs">0.118559mohms</text><text x="510.1" y="213.0" textLength="60" lengthAdjust="spacingAndGlyphs">0.118559mohms</text><text x="589.3" y="213.0" textLength="60" lengthAdjust="spacingAndGlyphs">0.046878mohms</text><text x="628.9" y="213.0" textLength="60" lengthAdjust="spacingAndGlyphs">0.046878mohms</text><text x="668.5" y="213.0" textLength="60" lengthAdjust="spacingAndGlyphs">0.046878mohms</text><text x="787.2" y="213.0" textLength="60" lengthAdjust="spacingAndGlyphs">0.118559mohms</text><text x="826.8" y="213.0" textLength="60" lengthAdjust="spacingAndGlyphs">0.118559mohms</text><text x="312.2" y="252.0" textLength="60" lengthAdjust="spacingAndGlyphs">0.046878mohms</text><text x="351.8" y="252.0" textLength="60" lengthAdjust="spacingAndGlyphs">0.046878mohms</text><text x="391.4" y="252.0" textLength="60" lengthAdjust="spacingAndGlyphs">0.046878mohms</text><text x="470.5" y="252.0" textLength="60" lengthAdjust="spacingAndGlyphs">0.118559mohms</text><text x="510.1" y="252.0" textLength="60" lengthAdjust="spacingAndGlyphs">0.118559mohms</text><text x="589.3" y="252.0" textLength="60" lengthAdjust="spacingAndGlyphs">0.046878mohms</text><text x="628.9" y="252.0" textLength="60" lengthAdjust="spacingAndGlyphs">0.046878mohms</text><text x="668.5" y="252.0" textLength="60" lengthAdjust="spacingAndGlyphs">0.046878mohms</text><text x="787.2" y="252.0" textLength="60" lengthAdjust="spacingAndGlyphs">0.118559mohms</text><text x="826.8" y="252.0" textLength="60" lengthAdjust="spacingAndGlyphs">0.118559mohms</text><text x="312.2" y="292.0" textLength="60" lengthAdjust="spacingAndGlyphs">0.046878mohms</text><text x="351.8" y="292.0" textLength="60" lengthAdjust="spacingAndGlyphs">0.046878mohms</text><text x="391.4" y="292.0" textLength="60" lengthAdjust="spacingAndGlyphs">0.046878mohms</text><text x="470.5" y="292.0" textLength="60" lengthAdjust="spacingAndGlyphs">0.118559mohms</text><text x="510.1" y="292.0" textLength="60" lengthAdjust="spacingAndGlyphs">0.118559mohms</text><text x="589.3" y="292.0" textLength="60" lengthAdjust="spacingAndGlyphs">0.046878mohms</text><text x="628.9" y="292.0" textLength="60" lengthAdjust="spacingAndGlyphs">0.046878mohms</text><text x="668.5" y="292.0" textLength="60" lengthAdjust="spacingAndGlyphs">0.046878mohms</text><text x="787.2" y="292.0" textLength="60" lengthAdjust="spacingAndGlyphs">0.118559mohms</text><text x="826.8" y="292.0" textLength="60" lengthAdjust="spacingAndGlyphs">0.118559mohms</text><text x="312.2" y="332.0" textLength="60" lengthAdjust="spacingAndGlyphs">0.046878mohms</text><text x="351.8" y="332.0" textLength="60" lengthAdjust="spacingAndGlyphs">0.046878mohms</text><text x="391.4" y="332.0" textLength="60" lengthAdjust="spacingAndGlyphs">0.046878mohms</text><text x="470.5" y="332.0" textLength="60" lengthAdjust="spacingAndGlyphs">0.118559mohms</text><text x="510.1" y="332.0" textLength="60" lengthAdjust="spacingAndGlyphs">0.118559mohms</text><text x="589.3" y="332.0" textLength="60" lengthAdjust="spacingAndGlyphs">0.046878mohms</text><text x="628.9" y="332.0" textLength="60" lengthAdjust="spacingAndGlyphs">0.046878mohms</text><text x="668.5" y="332.0" textLength="60" lengthAdjust="spacingAndGlyphs">0.046878mohms</text><text x="787.2" y="332.0" textLength="60" lengthAdjust="spacingAndGlyphs">0.118559mohms</text><text x="826.8" y="332.0" textLength="60" lengthAdjust="spacingAndGlyphs">0.118559mohms</text><text x="312.2" y="371.0" textLength="60" lengthAdjust="spacingAndGlyphs">0.046878mohms</text><text x="351.8" y="371.0" textLength="60" lengthAdjust="spacingAndGlyphs">0.046878mohms</text><text x="391.4" y="371.0" textLength="60" lengthAdjust="spacingAndGlyphs">0.046878mohms</text><text x="470.5" y="371.0" textLength="60" lengthAdjust="spacingAndGlyphs">0.118559mohms</text><text x="510.1" y="371.0" textLength="60" lengthAdjust="spacingAndGlyphs">0.118559mohms</text><text x="589.3" y="371.0" textLength="60" lengthAdjust="spacingAndGlyphs">0.046878mohms</text><text x="628.9" y="371.0" textLength="60" lengthAdjust="spacingAndGlyphs">0.046878mohms</text><text x="668.5" y="371.0" textLength="60" lengthAdjust="spacingAndGlyphs">0.046878mohms</text><text x="787.2" y="371.0" textLength="60" lengthAdjust="spacingAndGlyphs">0.118559mohms</text><text x="826.8" y="371.0" textLength="60" lengthAdjust="spacingAndGlyphs">0.118559mohms</text><text x="312.2" y="411.0" textLength="60" lengthAdjust="spacingAndGlyphs">0.046878mohms</text><text x="351.8" y="411.0" textLength="60" lengthAdjust="spacingAndGlyphs">0.046878mohms</text><text x="391.4" y="411.0" textLength="60" lengthAdjust="spacingAndGlyphs">0.046878mohms</text><text x="470.5" y="411.0" textLength="60" lengthAdjust="spacingAndGlyphs">0.118559mohms</text><text x="510.1" y="411.0" textLength="60" lengthAdjust="spacingAndGlyphs">0.118559mohms</text><text x="589.3" y="411.0" textLength="60" lengthAdjust="spacingAndGlyphs">0.046878mohms</text><text x="628.9" y="411.0" textLength="60" lengthAdjust="spacingAndGlyphs">0.046878mohms</text><text x="668.5" y="411.0" textLength="60" lengthAdjust="spacingAndGlyphs">0.046878mohms</text><text x="787.2" y="411.0" textLength="60" lengthAdjust="spacingAndGlyphs">0.118559mohms</text><text x="826.8" y="411.0" textLength="60" lengthAdjust="spacingAndGlyphs">0.118559mohms</text><text x="312.2" y="450.0" textLength="60" lengthAdjust="spacingAndGlyphs">0.046878mohms</text><text x="351.8" y="450.0" textLength="60" lengthAdjust="spacingAndGlyphs">0.046878mohms</text><text x="391.4" y="450.0" textLength="60" lengthAdjust="spacingAndGlyphs">0.046878mohms</text><text x="470.5" y="450.0" textLength="60" lengthAdjust="spacingAndGlyphs">0.118559mohms</text><text x="510.1" y="450.0" textLength="60" lengthAdjust="spacingAndGlyphs">0.118559mohms</text><text x="589.3" y="450.0" textLength="60" lengthAdjust="spacingAndGlyphs">0.046878mohms</text><text x="628.9" y="450.0" textLength="60" lengthAdjust="spacingAndGlyphs">0.046878mohms</text><text x="668.5" y="450.0" textLength="60" lengthAdjust="spacingAndGlyphs">0.046878mohms</text><text x="787.2" y="450.0" textLength="60" lengthAdjust="spacingAndGlyphs">0.118559mohms</text><text x="826.8" y="450.0" textLength="60" lengthAdjust="spacingAndGlyphs">0.118559mohms</text><text x="312.2" y="490.0" textLength="60" lengthAdjust="spacingAndGlyphs">0.046878mohms</text><text x="351.8" y="490.0" textLength="60" lengthAdjust="spacingAndGlyphs">0.046878mohms</text><text x="391.4" y="490.0" textLength="60" lengthAdjust="spacingAndGlyphs">0.046878mohms</text><text x="470.5" y="490.0" textLength="60" lengthAdjust="spacingAndGlyphs">0.118559mohms</text><text x="510.1" y="490.0" textLength="60" lengthAdjust="spacingAndGlyphs">0.118559mohms</text><text x="589.3" y="490.0" textLength="60" lengthAdjust="spacingAndGlyphs">0.046878mohms</text><text x="628.9" y="490.0" textLength="60" lengthAdjust="spacingAndGlyphs">0.046878mohms</text><text x="668.5" y="490.0" textLength="60" lengthAdjust="spacingAndGlyphs">0.046878mohms</text><text x="787.2" y="490.0" textLength="60" lengthAdjust="spacingAndGlyphs">0.118559mohms</text><text x="826.8" y="490.0" textLength="60" lengthAdjust="spacingAndGlyphs">0.118559mohms</text><text x="312.2" y="529.0" textLength="60" lengthAdjust="spacingAndGlyphs">0.046878mohms</text><text x="351.8" y="529.0" textLength="60" lengthAdjust="spacingAndGlyphs">0.046878mohms</text><text x="391.4" y="529.0" textLength="60" lengthAdjust="spacingAndGlyphs">0.046878mohms</text><text x="470.5" y="529.0" textLength="60" lengthAdjust="spacingAndGlyphs">0.118559mohms</text><text x="510.1" y="529.0" textLength="60" lengthAdjust="spacingAndGlyphs">0.118559mohms</text><text x="589.3" y="529.0" textLength="60" lengthAdjust="spacingAndGlyphs">0.046878mohms</text><text x="628.9" y="529.0" textLength="60" lengthAdjust="spacingAndGlyphs">0.046878mohms</text><text x="668.5" y="529.0" textLength="60" lengthAdjust="spacingAndGlyphs">0.046878mohms</text><text x="787.2" y="529.0" textLength="60" lengthAdjust="spacingAndGlyphs">0.118559mohms</text><text x="826.8" y="529.0" textLength="60" lengthAdjust="spacingAndGlyphs">0.118559mohms</text><text x="312.2" y="569.0" textLength="60" lengthAdjust="spacingAndGlyphs">0.046878mohms</text><text x="351.8" y="569.0" textLength="60" lengthAdjust="spacingAndGlyphs">0.046878mohms</text><text x="391.4" y="569.0" textLength="60" lengthAdjust="spacingAndGlyphs">0.046878mohms</text><text x="470.5" y="569.0" textLength="60" lengthAdjust="spacingAndGlyphs">0.118559mohms</text><text x="510.1" y="569.0" textLength="60" lengthAdjust="spacingAndGlyphs">0.118559mohms</text><text x="589.3" y="569.0" textLength="60" lengthAdjust="spacingAndGlyphs">0.046878mohms</text><text x="628.9" y="569.0" textLength="60" lengthAdjust="spacingAndGlyphs">0.046878mohms</text><text x="668.5" y="569.0" textLength="60" lengthAdjust="spacingAndGlyphs">0.046878mohms</text><text x="787.2" y="569.0" textLength="60" lengthAdjust="spacingAndGlyphs">0.118559mohms</text><text x="826.8" y="569.0" textLength="60" lengthAdjust="spacingAndGlyphs">0.118559mohms</text><text x="312.2" y="609.0" textLength="60" lengthAdjust="spacingAndGlyphs">0.046878mohms</text><text x="351.8" y="609.0" textLength="60" lengthAdjust="spacingAndGlyphs">0.046878mohms</text><text x="391.4" y="609.0" textLength="60" lengthAdjust="spacingAndGlyphs">0.046878mohms</text><text x="470.5" y="609.0" textLength="60" lengthAdjust="spacingAndGlyphs">0.118559mohms</text><text x="510.1" y="609.0" textLength="60" lengthAdjust="spacingAndGlyphs">0.118559mohms</text><text x="589.3" y="609.0" textLength="60" lengthAdjust="spacingAndGlyphs">0.046878mohms</text><text x="628.9" y="609.0" textLength="60" lengthAdjust="spacingAndGlyphs">0.046878mohms</text><text x="668.5" y="609.0" textLength="60" lengthAdjust="spacingAndGlyphs">0.046878mohms</text><text x="787.2" y="609.0" textLength="60" lengthAdjust="spacingAndGlyphs">0.118559mohms</text><text x="826.8" y="609.0" textLength="60" lengthAdjust="spacingAndGlyphs">0.118559mohms</text><text x="312.2" y="648.0" textLength="60" lengthAdjust="spacingAndGlyphs">0.046878mohms</text><text x="351.8" y="648.0" textLength="60" lengthAdjust="spacingAndGlyphs">0.046878mohms</text><text x="391.4" y="648.0" textLength="60" lengthAdjust="spacingAndGlyphs">0.046878mohms</text><text x="470.5" y="648.0" textLength="60" lengthAdjust="spacingAndGlyphs">0.118559mohms</text><text x="510.1" y="648.0" textLength="60" lengthAdjust="spacingAndGlyphs">0.118559mohms</text><text x="589.3" y="648.0" textLength="60" lengthAdjust="spacingAndGlyphs">0.046878mohms</text><text x="628.9" y="648.0" textLength="60" lengthAdjust="spacingAndGlyphs">0.046878mohms</text><text x="668.5" y="648.0" textLength="60" lengthAdjust="spacingAndGlyphs">0.046878mohms</text><text x="787.2" y="648.0" textLength="60" lengthAdjust="spacingAndGlyphs">0.118559mohms</text><text x="826.8" y="648.0" textLength="60" lengthAdjust="spacingAndGlyphs">0.118559mohms</text><text x="272.6" y="688.0" textLength="60" lengthAdjust="spacingAndGlyphs">0.046878mohms</text><text x="470.5" y="688.0" textLength="43" lengthAdjust="spacingAndGlyphs">2.94mohms</text><text x="510.1" y="688.0" textLength="43" lengthAdjust="spacingAndGlyphs">2.94mohms</text><text x="549.7" y="688.0" textLength="43" lengthAdjust="spacingAndGlyphs">2.94mohms</text><text x="589.3" y="688.0" textLength="43" lengthAdjust="spacingAndGlyphs">2.94mohms</text><text x="628.9" y="688.0" textLength="43" lengthAdjust="spacingAndGlyphs">2.94mohms</text><text x="668.5" y="688.0" textLength="43" lengthAdjust="spacingAndGlyphs">2.94mohms</text><text x="787.2" y="688.0" textLength="60" lengthAdjust="spacingAndGlyphs">0.046878mohms</text><text x="866.4" y="688.0" textLength="60" lengthAdjust="spacingAndGlyphs">0.046878mohms</text><text x="549.7" y="727.0" textLength="43" lengthAdjust="spacingAndGlyphs">2.94mohms</text><text x="589.3" y="727.0" textLength="43" lengthAdjust="spacingAndGlyphs">2.94mohms</text></g>
<g clip-path="url(#cb)" font-family="Liberation Sans, sans-serif" font-size="8.7" fill="#9a8a60"><text x="549.7" y="54.0" textLength="43" lengthAdjust="spacingAndGlyphs">2.94mohms</text><text x="589.3" y="54.0" textLength="43" lengthAdjust="spacingAndGlyphs">2.94mohms</text><text x="272.6" y="94.0" textLength="60" lengthAdjust="spacingAndGlyphs">0.046878mohms</text><text x="470.5" y="94.0" textLength="43" lengthAdjust="spacingAndGlyphs">2.94mohms</text><text x="510.1" y="94.0" textLength="43" lengthAdjust="spacingAndGlyphs">2.94mohms</text><text x="549.7" y="94.0" textLength="43" lengthAdjust="spacingAndGlyphs">2.94mohms</text><text x="589.3" y="94.0" textLength="43" lengthAdjust="spacingAndGlyphs">2.94mohms</text><text x="628.9" y="94.0" textLength="43" lengthAdjust="spacingAndGlyphs">2.94mohms</text><text x="668.5" y="94.0" textLength="43" lengthAdjust="spacingAndGlyphs">2.94mohms</text><text x="866.4" y="94.0" textLength="60" lengthAdjust="spacingAndGlyphs">0.046878mohms</text><text x="312.2" y="134.0" textLength="60" lengthAdjust="spacingAndGlyphs">0.046878mohms</text><text x="351.8" y="134.0" textLength="60" lengthAdjust="spacingAndGlyphs">0.046878mohms</text><text x="391.4" y="134.0" textLength="60" lengthAdjust="spacingAndGlyphs">0.046878mohms</text><text x="470.5" y="134.0" textLength="60" lengthAdjust="spacingAndGlyphs">0.118559mohms</text><text x="510.1" y="134.0" textLength="60" lengthAdjust="spacingAndGlyphs">0.118559mohms</text><text x="589.3" y="134.0" textLength="60" lengthAdjust="spacingAndGlyphs">0.046878mohms</text><text x="628.9" y="134.0" textLength="60" lengthAdjust="spacingAndGlyphs">0.046878mohms</text><text x="668.5" y="134.0" textLength="60" lengthAdjust="spacingAndGlyphs">0.046878mohms</text><text x="787.2" y="134.0" textLength="60" lengthAdjust="spacingAndGlyphs">0.118559mohms</text><text x="826.8" y="134.0" textLength="60" lengthAdjust="spacingAndGlyphs">0.118559mohms</text><text x="312.2" y="173.0" textLength="60" lengthAdjust="spacingAndGlyphs">0.046878mohms</text><text x="351.8" y="173.0" textLength="60" lengthAdjust="spacingAndGlyphs">0.046878mohms</text><text x="391.4" y="173.0" textLength="60" lengthAdjust="spacingAndGlyphs">0.046878mohms</text><text x="470.5" y="173.0" textLength="60" lengthAdjust="spacingAndGlyphs">0.118559mohms</text><text x="510.1" y="173.0" textLength="60" lengthAdjust="spacingAndGlyphs">0.118559mohms</text><text x="589.3" y="173.0" textLength="60" lengthAdjust="spacingAndGlyphs">0.046878mohms</text><text x="628.9" y="173.0" textLength="60" lengthAdjust="spacingAndGlyphs">0.046878mohms</text><text x="668.5" y="173.0" textLength="60" lengthAdjust="spacingAndGlyphs">0.046878mohms</text><text x="787.2" y="173.0" textLength="60" lengthAdjust="spacingAndGlyphs">0.118559mohms</text><text x="826.8" y="173.0" textLength="60" lengthAdjust="spacingAndGlyphs">0.118559mohms</text><text x="312.2" y="213.0" textLength="60" lengthAdjust="spacingAndGlyphs">0.046878mohms</text><text x="351.8" y="213.0" textLength="60" lengthAdjust="spacingAndGlyphs">0.046878mohms</text><text x="391.4" y="213.0" textLength="60" lengthAdjust="spacingAndGlyphs">0.046878mohms</text><text x="470.5" y="213.0" textLength="60" lengthAdjust="spacingAndGlyphs">0.118559mohms</text><text x="510.1" y="213.0" textLength="60" lengthAdjust="spacingAndGlyphs">0.118559mohms</text><text x="589.3" y="213.0" textLength="60" lengthAdjust="spacingAndGlyphs">0.046878mohms</text><text x="628.9" y="213.0" textLength="60" lengthAdjust="spacingAndGlyphs">0.046878mohms</text><text x="668.5" y="213.0" textLength="60" lengthAdjust="spacingAndGlyphs">0.046878mohms</text><text x="787.2" y="213.0" textLength="60" lengthAdjust="spacingAndGlyphs">0.118559mohms</text><text x="826.8" y="213.0" textLength="60" lengthAdjust="spacingAndGlyphs">0.118559mohms</text><text x="312.2" y="252.0" textLength="60" lengthAdjust="spacingAndGlyphs">0.046878mohms</text><text x="351.8" y="252.0" textLength="60" lengthAdjust="spacingAndGlyphs">0.046878mohms</text><text x="391.4" y="252.0" textLength="60" lengthAdjust="spacingAndGlyphs">0.046878mohms</text><text x="470.5" y="252.0" textLength="60" lengthAdjust="spacingAndGlyphs">0.118559mohms</text><text x="510.1" y="252.0" textLength="60" lengthAdjust="spacingAndGlyphs">0.118559mohms</text><text x="589.3" y="252.0" textLength="60" lengthAdjust="spacingAndGlyphs">0.046878mohms</text><text x="628.9" y="252.0" textLength="60" lengthAdjust="spacingAndGlyphs">0.046878mohms</text><text x="668.5" y="252.0" textLength="60" lengthAdjust="spacingAndGlyphs">0.046878mohms</text><text x="787.2" y="252.0" textLength="60" lengthAdjust="spacingAndGlyphs">0.118559mohms</text><text x="826.8" y="252.0" textLength="60" lengthAdjust="spacingAndGlyphs">0.118559mohms</text><text x="312.2" y="292.0" textLength="60" lengthAdjust="spacingAndGlyphs">0.046878mohms</text><text x="351.8" y="292.0" textLength="60" lengthAdjust="spacingAndGlyphs">0.046878mohms</text><text x="391.4" y="292.0" textLength="60" lengthAdjust="spacingAndGlyphs">0.046878mohms</text><text x="470.5" y="292.0" textLength="60" lengthAdjust="spacingAndGlyphs">0.118559mohms</text><text x="510.1" y="292.0" textLength="60" lengthAdjust="spacingAndGlyphs">0.118559mohms</text><text x="589.3" y="292.0" textLength="60" lengthAdjust="spacingAndGlyphs">0.046878mohms</text><text x="628.9" y="292.0" textLength="60" lengthAdjust="spacingAndGlyphs">0.046878mohms</text><text x="668.5" y="292.0" textLength="60" lengthAdjust="spacingAndGlyphs">0.046878mohms</text><text x="787.2" y="292.0" textLength="60" lengthAdjust="spacingAndGlyphs">0.118559mohms</text><text x="826.8" y="292.0" textLength="60" lengthAdjust="spacingAndGlyphs">0.118559mohms</text><text x="312.2" y="332.0" textLength="60" lengthAdjust="spacingAndGlyphs">0.046878mohms</text><text x="351.8" y="332.0" textLength="60" lengthAdjust="spacingAndGlyphs">0.046878mohms</text><text x="391.4" y="332.0" textLength="60" lengthAdjust="spacingAndGlyphs">0.046878mohms</text><text x="470.5" y="332.0" textLength="60" lengthAdjust="spacingAndGlyphs">0.118559mohms</text><text x="510.1" y="332.0" textLength="60" lengthAdjust="spacingAndGlyphs">0.118559mohms</text><text x="589.3" y="332.0" textLength="60" lengthAdjust="spacingAndGlyphs">0.046878mohms</text><text x="628.9" y="332.0" textLength="60" lengthAdjust="spacingAndGlyphs">0.046878mohms</text><text x="668.5" y="332.0" textLength="60" lengthAdjust="spacingAndGlyphs">0.046878mohms</text><text x="787.2" y="332.0" textLength="60" lengthAdjust="spacingAndGlyphs">0.118559mohms</text><text x="826.8" y="332.0" textLength="60" lengthAdjust="spacingAndGlyphs">0.118559mohms</text><text x="312.2" y="371.0" textLength="60" lengthAdjust="spacingAndGlyphs">0.046878mohms</text><text x="351.8" y="371.0" textLength="60" lengthAdjust="spacingAndGlyphs">0.046878mohms</text><text x="391.4" y="371.0" textLength="60" lengthAdjust="spacingAndGlyphs">0.046878mohms</text><text x="470.5" y="371.0" textLength="60" lengthAdjust="spacingAndGlyphs">0.118559mohms</text><text x="510.1" y="371.0" textLength="60" lengthAdjust="spacingAndGlyphs">0.118559mohms</text><text x="589.3" y="371.0" textLength="60" lengthAdjust="spacingAndGlyphs">0.046878mohms</text><text x="628.9" y="371.0" textLength="60" lengthAdjust="spacingAndGlyphs">0.046878mohms</text><text x="668.5" y="371.0" textLength="60" lengthAdjust="spacingAndGlyphs">0.046878mohms</text><text x="787.2" y="371.0" textLength="60" lengthAdjust="spacingAndGlyphs">0.118559mohms</text><text x="826.8" y="371.0" textLength="60" lengthAdjust="spacingAndGlyphs">0.118559mohms</text><text x="312.2" y="411.0" textLength="60" lengthAdjust="spacingAndGlyphs">0.046878mohms</text><text x="351.8" y="411.0" textLength="60" lengthAdjust="spacingAndGlyphs">0.046878mohms</text><text x="391.4" y="411.0" textLength="60" lengthAdjust="spacingAndGlyphs">0.046878mohms</text><text x="470.5" y="411.0" textLength="60" lengthAdjust="spacingAndGlyphs">0.118559mohms</text><text x="510.1" y="411.0" textLength="60" lengthAdjust="spacingAndGlyphs">0.118559mohms</text><text x="589.3" y="411.0" textLength="60" lengthAdjust="spacingAndGlyphs">0.046878mohms</text><text x="628.9" y="411.0" textLength="60" lengthAdjust="spacingAndGlyphs">0.046878mohms</text><text x="668.5" y="411.0" textLength="60" lengthAdjust="spacingAndGlyphs">0.046878mohms</text><text x="787.2" y="411.0" textLength="60" lengthAdjust="spacingAndGlyphs">0.118559mohms</text><text x="826.8" y="411.0" textLength="60" lengthAdjust="spacingAndGlyphs">0.118559mohms</text><text x="312.2" y="450.0" textLength="60" lengthAdjust="spacingAndGlyphs">0.046878mohms</text><text x="351.8" y="450.0" textLength="60" lengthAdjust="spacingAndGlyphs">0.046878mohms</text><text x="391.4" y="450.0" textLength="60" lengthAdjust="spacingAndGlyphs">0.046878mohms</text><text x="470.5" y="450.0" textLength="60" lengthAdjust="spacingAndGlyphs">0.118559mohms</text><text x="510.1" y="450.0" textLength="60" lengthAdjust="spacingAndGlyphs">0.118559mohms</text><text x="589.3" y="450.0" textLength="60" lengthAdjust="spacingAndGlyphs">0.046878mohms</text><text x="628.9" y="450.0" textLength="60" lengthAdjust="spacingAndGlyphs">0.046878mohms</text><text x="668.5" y="450.0" textLength="60" lengthAdjust="spacingAndGlyphs">0.046878mohms</text><text x="787.2" y="450.0" textLength="60" lengthAdjust="spacingAndGlyphs">0.118559mohms</text><text x="826.8" y="450.0" textLength="60" lengthAdjust="spacingAndGlyphs">0.118559mohms</text><text x="312.2" y="490.0" textLength="60" lengthAdjust="spacingAndGlyphs">0.046878mohms</text><text x="351.8" y="490.0" textLength="60" lengthAdjust="spacingAndGlyphs">0.046878mohms</text><text x="391.4" y="490.0" textLength="60" lengthAdjust="spacingAndGlyphs">0.046878mohms</text><text x="470.5" y="490.0" textLength="60" lengthAdjust="spacingAndGlyphs">0.118559mohms</text><text x="510.1" y="490.0" textLength="60" lengthAdjust="spacingAndGlyphs">0.118559mohms</text><text x="589.3" y="490.0" textLength="60" lengthAdjust="spacingAndGlyphs">0.046878mohms</text><text x="628.9" y="490.0" textLength="60" lengthAdjust="spacingAndGlyphs">0.046878mohms</text><text x="668.5" y="490.0" textLength="60" lengthAdjust="spacingAndGlyphs">0.046878mohms</text><text x="787.2" y="490.0" textLength="60" lengthAdjust="spacingAndGlyphs">0.118559mohms</text><text x="826.8" y="490.0" textLength="60" lengthAdjust="spacingAndGlyphs">0.118559mohms</text><text x="312.2" y="529.0" textLength="60" lengthAdjust="spacingAndGlyphs">0.046878mohms</text><text x="351.8" y="529.0" textLength="60" lengthAdjust="spacingAndGlyphs">0.046878mohms</text><text x="391.4" y="529.0" textLength="60" lengthAdjust="spacingAndGlyphs">0.046878mohms</text><text x="470.5" y="529.0" textLength="60" lengthAdjust="spacingAndGlyphs">0.118559mohms</text><text x="510.1" y="529.0" textLength="60" lengthAdjust="spacingAndGlyphs">0.118559mohms</text><text x="589.3" y="529.0" textLength="60" lengthAdjust="spacingAndGlyphs">0.046878mohms</text><text x="628.9" y="529.0" textLength="60" lengthAdjust="spacingAndGlyphs">0.046878mohms</text><text x="668.5" y="529.0" textLength="60" lengthAdjust="spacingAndGlyphs">0.046878mohms</text><text x="787.2" y="529.0" textLength="60" lengthAdjust="spacingAndGlyphs">0.118559mohms</text><text x="826.8" y="529.0" textLength="60" lengthAdjust="spacingAndGlyphs">0.118559mohms</text><text x="312.2" y="569.0" textLength="60" lengthAdjust="spacingAndGlyphs">0.046878mohms</text><text x="351.8" y="569.0" textLength="60" lengthAdjust="spacingAndGlyphs">0.046878mohms</text><text x="391.4" y="569.0" textLength="60" lengthAdjust="spacingAndGlyphs">0.046878mohms</text><text x="470.5" y="569.0" textLength="60" lengthAdjust="spacingAndGlyphs">0.118559mohms</text><text x="510.1" y="569.0" textLength="60" lengthAdjust="spacingAndGlyphs">0.118559mohms</text><text x="589.3" y="569.0" textLength="60" lengthAdjust="spacingAndGlyphs">0.046878mohms</text><text x="628.9" y="569.0" textLength="60" lengthAdjust="spacingAndGlyphs">0.046878mohms</text><text x="668.5" y="569.0" textLength="60" lengthAdjust="spacingAndGlyphs">0.046878mohms</text><text x="787.2" y="569.0" textLength="60" lengthAdjust="spacingAndGlyphs">0.118559mohms</text><text x="826.8" y="569.0" textLength="60" lengthAdjust="spacingAndGlyphs">0.118559mohms</text><text x="312.2" y="609.0" textLength="60" lengthAdjust="spacingAndGlyphs">0.046878mohms</text><text x="351.8" y="609.0" textLength="60" lengthAdjust="spacingAndGlyphs">0.046878mohms</text><text x="391.4" y="609.0" textLength="60" lengthAdjust="spacingAndGlyphs">0.046878mohms</text><text x="470.5" y="609.0" textLength="60" lengthAdjust="spacingAndGlyphs">0.118559mohms</text><text x="510.1" y="609.0" textLength="60" lengthAdjust="spacingAndGlyphs">0.118559mohms</text><text x="589.3" y="609.0" textLength="60" lengthAdjust="spacingAndGlyphs">0.046878mohms</text><text x="628.9" y="609.0" textLength="60" lengthAdjust="spacingAndGlyphs">0.046878mohms</text><text x="668.5" y="609.0" textLength="60" lengthAdjust="spacingAndGlyphs">0.046878mohms</text><text x="787.2" y="609.0" textLength="60" lengthAdjust="spacingAndGlyphs">0.118559mohms</text><text x="826.8" y="609.0" textLength="60" lengthAdjust="spacingAndGlyphs">0.118559mohms</text><text x="312.2" y="648.0" textLength="60" lengthAdjust="spacingAndGlyphs">0.046878mohms</text><text x="351.8" y="648.0" textLength="60" lengthAdjust="spacingAndGlyphs">0.046878mohms</text><text x="391.4" y="648.0" textLength="60" lengthAdjust="spacingAndGlyphs">0.046878mohms</text><text x="470.5" y="648.0" textLength="60" lengthAdjust="spacingAndGlyphs">0.118559mohms</text><text x="510.1" y="648.0" textLength="60" lengthAdjust="spacingAndGlyphs">0.118559mohms</text><text x="589.3" y="648.0" textLength="60" lengthAdjust="spacingAndGlyphs">0.046878mohms</text><text x="628.9" y="648.0" textLength="60" lengthAdjust="spacingAndGlyphs">0.046878mohms</text><text x="668.5" y="648.0" textLength="60" lengthAdjust="spacingAndGlyphs">0.046878mohms</text><text x="787.2" y="648.0" textLength="60" lengthAdjust="spacingAndGlyphs">0.118559mohms</text><text x="826.8" y="648.0" textLength="60" lengthAdjust="spacingAndGlyphs">0.118559mohms</text><text x="272.6" y="688.0" textLength="60" lengthAdjust="spacingAndGlyphs">0.046878mohms</text><text x="470.5" y="688.0" textLength="43" lengthAdjust="spacingAndGlyphs">2.94mohms</text><text x="510.1" y="688.0" textLength="43" lengthAdjust="spacingAndGlyphs">2.94mohms</text><text x="549.7" y="688.0" textLength="43" lengthAdjust="spacingAndGlyphs">2.94mohms</text><text x="589.3" y="688.0" textLength="43" lengthAdjust="spacingAndGlyphs">2.94mohms</text><text x="628.9" y="688.0" textLength="43" lengthAdjust="spacingAndGlyphs">2.94mohms</text><text x="668.5" y="688.0" textLength="43" lengthAdjust="spacingAndGlyphs">2.94mohms</text><text x="787.2" y="688.0" textLength="60" lengthAdjust="spacingAndGlyphs">0.046878mohms</text><text x="866.4" y="688.0" textLength="60" lengthAdjust="spacingAndGlyphs">0.046878mohms</text><text x="549.7" y="727.0" textLength="43" lengthAdjust="spacingAndGlyphs">2.94mohms</text><text x="589.3" y="727.0" textLength="43" lengthAdjust="spacingAndGlyphs">2.94mohms</text></g>
<g clip-path="url(#cr)" font-family="Liberation Sans, sans-serif" font-size="8.7" fill="#5c7474"><text x="549.7" y="54.0" textLength="43" lengthAdjust="spacingAndGlyphs">2.94mohms</text><text x="589.3" y="54.0" textLength="43" lengthAdjust="spacingAndGlyphs">2.94mohms</text><text x="272.6" y="94.0" textLength="60" lengthAdjust="spacingAndGlyphs">0.046878mohms</text><text x="470.5" y="94.0" textLength="43" lengthAdjust="spacingAndGlyphs">2.94mohms</text><text x="510.1" y="94.0" textLength="43" lengthAdjust="spacingAndGlyphs">2.94mohms</text><text x="549.7" y="94.0" textLength="43" lengthAdjust="spacingAndGlyphs">2.94mohms</text><text x="589.3" y="94.0" textLength="43" lengthAdjust="spacingAndGlyphs">2.94mohms</text><text x="628.9" y="94.0" textLength="43" lengthAdjust="spacingAndGlyphs">2.94mohms</text><text x="668.5" y="94.0" textLength="43" lengthAdjust="spacingAndGlyphs">2.94mohms</text><text x="866.4" y="94.0" textLength="60" lengthAdjust="spacingAndGlyphs">0.046878mohms</text><text x="312.2" y="134.0" textLength="60" lengthAdjust="spacingAndGlyphs">0.046878mohms</text><text x="351.8" y="134.0" textLength="60" lengthAdjust="spacingAndGlyphs">0.046878mohms</text><text x="391.4" y="134.0" textLength="60" lengthAdjust="spacingAndGlyphs">0.046878mohms</text><text x="470.5" y="134.0" textLength="60" lengthAdjust="spacingAndGlyphs">0.118559mohms</text><text x="510.1" y="134.0" textLength="60" lengthAdjust="spacingAndGlyphs">0.118559mohms</text><text x="589.3" y="134.0" textLength="60" lengthAdjust="spacingAndGlyphs">0.046878mohms</text><text x="628.9" y="134.0" textLength="60" lengthAdjust="spacingAndGlyphs">0.046878mohms</text><text x="668.5" y="134.0" textLength="60" lengthAdjust="spacingAndGlyphs">0.046878mohms</text><text x="787.2" y="134.0" textLength="60" lengthAdjust="spacingAndGlyphs">0.118559mohms</text><text x="826.8" y="134.0" textLength="60" lengthAdjust="spacingAndGlyphs">0.118559mohms</text><text x="312.2" y="173.0" textLength="60" lengthAdjust="spacingAndGlyphs">0.046878mohms</text><text x="351.8" y="173.0" textLength="60" lengthAdjust="spacingAndGlyphs">0.046878mohms</text><text x="391.4" y="173.0" textLength="60" lengthAdjust="spacingAndGlyphs">0.046878mohms</text><text x="470.5" y="173.0" textLength="60" lengthAdjust="spacingAndGlyphs">0.118559mohms</text><text x="510.1" y="173.0" textLength="60" lengthAdjust="spacingAndGlyphs">0.118559mohms</text><text x="589.3" y="173.0" textLength="60" lengthAdjust="spacingAndGlyphs">0.046878mohms</text><text x="628.9" y="173.0" textLength="60" lengthAdjust="spacingAndGlyphs">0.046878mohms</text><text x="668.5" y="173.0" textLength="60" lengthAdjust="spacingAndGlyphs">0.046878mohms</text><text x="787.2" y="173.0" textLength="60" lengthAdjust="spacingAndGlyphs">0.118559mohms</text><text x="826.8" y="173.0" textLength="60" lengthAdjust="spacingAndGlyphs">0.118559mohms</text><text x="312.2" y="213.0" textLength="60" lengthAdjust="spacingAndGlyphs">0.046878mohms</text><text x="351.8" y="213.0" textLength="60" lengthAdjust="spacingAndGlyphs">0.046878mohms</text><text x="391.4" y="213.0" textLength="60" lengthAdjust="spacingAndGlyphs">0.046878mohms</text><text x="470.5" y="213.0" textLength="60" lengthAdjust="spacingAndGlyphs">0.118559mohms</text><text x="510.1" y="213.0" textLength="60" lengthAdjust="spacingAndGlyphs">0.118559mohms</text><text x="589.3" y="213.0" textLength="60" lengthAdjust="spacingAndGlyphs">0.046878mohms</text><text x="628.9" y="213.0" textLength="60" lengthAdjust="spacingAndGlyphs">0.046878mohms</text><text x="668.5" y="213.0" textLength="60" lengthAdjust="spacingAndGlyphs">0.046878mohms</text><text x="787.2" y="213.0" textLength="60" lengthAdjust="spacingAndGlyphs">0.118559mohms</text><text x="826.8" y="213.0" textLength="60" lengthAdjust="spacingAndGlyphs">0.118559mohms</text><text x="312.2" y="252.0" textLength="60" lengthAdjust="spacingAndGlyphs">0.046878mohms</text><text x="351.8" y="252.0" textLength="60" lengthAdjust="spacingAndGlyphs">0.046878mohms</text><text x="391.4" y="252.0" textLength="60" lengthAdjust="spacingAndGlyphs">0.046878mohms</text><text x="470.5" y="252.0" textLength="60" lengthAdjust="spacingAndGlyphs">0.118559mohms</text><text x="510.1" y="252.0" textLength="60" lengthAdjust="spacingAndGlyphs">0.118559mohms</text><text x="589.3" y="252.0" textLength="60" lengthAdjust="spacingAndGlyphs">0.046878mohms</text><text x="628.9" y="252.0" textLength="60" lengthAdjust="spacingAndGlyphs">0.046878mohms</text><text x="668.5" y="252.0" textLength="60" lengthAdjust="spacingAndGlyphs">0.046878mohms</text><text x="787.2" y="252.0" textLength="60" lengthAdjust="spacingAndGlyphs">0.118559mohms</text><text x="826.8" y="252.0" textLength="60" lengthAdjust="spacingAndGlyphs">0.118559mohms</text><text x="312.2" y="292.0" textLength="60" lengthAdjust="spacingAndGlyphs">0.046878mohms</text><text x="351.8" y="292.0" textLength="60" lengthAdjust="spacingAndGlyphs">0.046878mohms</text><text x="391.4" y="292.0" textLength="60" lengthAdjust="spacingAndGlyphs">0.046878mohms</text><text x="470.5" y="292.0" textLength="60" lengthAdjust="spacingAndGlyphs">0.118559mohms</text><text x="510.1" y="292.0" textLength="60" lengthAdjust="spacingAndGlyphs">0.118559mohms</text><text x="589.3" y="292.0" textLength="60" lengthAdjust="spacingAndGlyphs">0.046878mohms</text><text x="628.9" y="292.0" textLength="60" lengthAdjust="spacingAndGlyphs">0.046878mohms</text><text x="668.5" y="292.0" textLength="60" lengthAdjust="spacingAndGlyphs">0.046878mohms</text><text x="787.2" y="292.0" textLength="60" lengthAdjust="spacingAndGlyphs">0.118559mohms</text><text x="826.8" y="292.0" textLength="60" lengthAdjust="spacingAndGlyphs">0.118559mohms</text><text x="312.2" y="332.0" textLength="60" lengthAdjust="spacingAndGlyphs">0.046878mohms</text><text x="351.8" y="332.0" textLength="60" lengthAdjust="spacingAndGlyphs">0.046878mohms</text><text x="391.4" y="332.0" textLength="60" lengthAdjust="spacingAndGlyphs">0.046878mohms</text><text x="470.5" y="332.0" textLength="60" lengthAdjust="spacingAndGlyphs">0.118559mohms</text><text x="510.1" y="332.0" textLength="60" lengthAdjust="spacingAndGlyphs">0.118559mohms</text><text x="589.3" y="332.0" textLength="60" lengthAdjust="spacingAndGlyphs">0.046878mohms</text><text x="628.9" y="332.0" textLength="60" lengthAdjust="spacingAndGlyphs">0.046878mohms</text><text x="668.5" y="332.0" textLength="60" lengthAdjust="spacingAndGlyphs">0.046878mohms</text><text x="787.2" y="332.0" textLength="60" lengthAdjust="spacingAndGlyphs">0.118559mohms</text><text x="826.8" y="332.0" textLength="60" lengthAdjust="spacingAndGlyphs">0.118559mohms</text><text x="312.2" y="371.0" textLength="60" lengthAdjust="spacingAndGlyphs">0.046878mohms</text><text x="351.8" y="371.0" textLength="60" lengthAdjust="spacingAndGlyphs">0.046878mohms</text><text x="391.4" y="371.0" textLength="60" lengthAdjust="spacingAndGlyphs">0.046878mohms</text><text x="470.5" y="371.0" textLength="60" lengthAdjust="spacingAndGlyphs">0.118559mohms</text><text x="510.1" y="371.0" textLength="60" lengthAdjust="spacingAndGlyphs">0.118559mohms</text><text x="589.3" y="371.0" textLength="60" lengthAdjust="spacingAndGlyphs">0.046878mohms</text><text x="628.9" y="371.0" textLength="60" lengthAdjust="spacingAndGlyphs">0.046878mohms</text><text x="668.5" y="371.0" textLength="60" lengthAdjust="spacingAndGlyphs">0.046878mohms</text><text x="787.2" y="371.0" textLength="60" lengthAdjust="spacingAndGlyphs">0.118559mohms</text><text x="826.8" y="371.0" textLength="60" lengthAdjust="spacingAndGlyphs">0.118559mohms</text><text x="312.2" y="411.0" textLength="60" lengthAdjust="spacingAndGlyphs">0.046878mohms</text><text x="351.8" y="411.0" textLength="60" lengthAdjust="spacingAndGlyphs">0.046878mohms</text><text x="391.4" y="411.0" textLength="60" lengthAdjust="spacingAndGlyphs">0.046878mohms</text><text x="470.5" y="411.0" textLength="60" lengthAdjust="spacingAndGlyphs">0.118559mohms</text><text x="510.1" y="411.0" textLength="60" lengthAdjust="spacingAndGlyphs">0.118559mohms</text><text x="589.3" y="411.0" textLength="60" lengthAdjust="spacingAndGlyphs">0.046878mohms</text><text x="628.9" y="411.0" textLength="60" lengthAdjust="spacingAndGlyphs">0.046878mohms</text><text x="668.5" y="411.0" textLength="60" lengthAdjust="spacingAndGlyphs">0.046878mohms</text><text x="787.2" y="411.0" textLength="60" lengthAdjust="spacingAndGlyphs">0.118559mohms</text><text x="826.8" y="411.0" textLength="60" lengthAdjust="spacingAndGlyphs">0.118559mohms</text><text x="312.2" y="450.0" textLength="60" lengthAdjust="spacingAndGlyphs">0.046878mohms</text><text x="351.8" y="450.0" textLength="60" lengthAdjust="spacingAndGlyphs">0.046878mohms</text><text x="391.4" y="450.0" textLength="60" lengthAdjust="spacingAndGlyphs">0.046878mohms</text><text x="470.5" y="450.0" textLength="60" lengthAdjust="spacingAndGlyphs">0.118559mohms</text><text x="510.1" y="450.0" textLength="60" lengthAdjust="spacingAndGlyphs">0.118559mohms</text><text x="589.3" y="450.0" textLength="60" lengthAdjust="spacingAndGlyphs">0.046878mohms</text><text x="628.9" y="450.0" textLength="60" lengthAdjust="spacingAndGlyphs">0.046878mohms</text><text x="668.5" y="450.0" textLength="60" lengthAdjust="spacingAndGlyphs">0.046878mohms</text><text x="787.2" y="450.0" textLength="60" lengthAdjust="spacingAndGlyphs">0.118559mohms</text><text x="826.8" y="450.0" textLength="60" lengthAdjust="spacingAndGlyphs">0.118559mohms</text><text x="312.2" y="490.0" textLength="60" lengthAdjust="spacingAndGlyphs">0.046878mohms</text><text x="351.8" y="490.0" textLength="60" lengthAdjust="spacingAndGlyphs">0.046878mohms</text><text x="391.4" y="490.0" textLength="60" lengthAdjust="spacingAndGlyphs">0.046878mohms</text><text x="470.5" y="490.0" textLength="60" lengthAdjust="spacingAndGlyphs">0.118559mohms</text><text x="510.1" y="490.0" textLength="60" lengthAdjust="spacingAndGlyphs">0.118559mohms</text><text x="589.3" y="490.0" textLength="60" lengthAdjust="spacingAndGlyphs">0.046878mohms</text><text x="628.9" y="490.0" textLength="60" lengthAdjust="spacingAndGlyphs">0.046878mohms</text><text x="668.5" y="490.0" textLength="60" lengthAdjust="spacingAndGlyphs">0.046878mohms</text><text x="787.2" y="490.0" textLength="60" lengthAdjust="spacingAndGlyphs">0.118559mohms</text><text x="826.8" y="490.0" textLength="60" lengthAdjust="spacingAndGlyphs">0.118559mohms</text><text x="312.2" y="529.0" textLength="60" lengthAdjust="spacingAndGlyphs">0.046878mohms</text><text x="351.8" y="529.0" textLength="60" lengthAdjust="spacingAndGlyphs">0.046878mohms</text><text x="391.4" y="529.0" textLength="60" lengthAdjust="spacingAndGlyphs">0.046878mohms</text><text x="470.5" y="529.0" textLength="60" lengthAdjust="spacingAndGlyphs">0.118559mohms</text><text x="510.1" y="529.0" textLength="60" lengthAdjust="spacingAndGlyphs">0.118559mohms</text><text x="589.3" y="529.0" textLength="60" lengthAdjust="spacingAndGlyphs">0.046878mohms</text><text x="628.9" y="529.0" textLength="60" lengthAdjust="spacingAndGlyphs">0.046878mohms</text><text x="668.5" y="529.0" textLength="60" lengthAdjust="spacingAndGlyphs">0.046878mohms</text><text x="787.2" y="529.0" textLength="60" lengthAdjust="spacingAndGlyphs">0.118559mohms</text><text x="826.8" y="529.0" textLength="60" lengthAdjust="spacingAndGlyphs">0.118559mohms</text><text x="312.2" y="569.0" textLength="60" lengthAdjust="spacingAndGlyphs">0.046878mohms</text><text x="351.8" y="569.0" textLength="60" lengthAdjust="spacingAndGlyphs">0.046878mohms</text><text x="391.4" y="569.0" textLength="60" lengthAdjust="spacingAndGlyphs">0.046878mohms</text><text x="470.5" y="569.0" textLength="60" lengthAdjust="spacingAndGlyphs">0.118559mohms</text><text x="510.1" y="569.0" textLength="60" lengthAdjust="spacingAndGlyphs">0.118559mohms</text><text x="589.3" y="569.0" textLength="60" lengthAdjust="spacingAndGlyphs">0.046878mohms</text><text x="628.9" y="569.0" textLength="60" lengthAdjust="spacingAndGlyphs">0.046878mohms</text><text x="668.5" y="569.0" textLength="60" lengthAdjust="spacingAndGlyphs">0.046878mohms</text><text x="787.2" y="569.0" textLength="60" lengthAdjust="spacingAndGlyphs">0.118559mohms</text><text x="826.8" y="569.0" textLength="60" lengthAdjust="spacingAndGlyphs">0.118559mohms</text><text x="312.2" y="609.0" textLength="60" lengthAdjust="spacingAndGlyphs">0.046878mohms</text><text x="351.8" y="609.0" textLength="60" lengthAdjust="spacingAndGlyphs">0.046878mohms</text><text x="391.4" y="609.0" textLength="60" lengthAdjust="spacingAndGlyphs">0.046878mohms</text><text x="470.5" y="609.0" textLength="60" lengthAdjust="spacingAndGlyphs">0.118559mohms</text><text x="510.1" y="609.0" textLength="60" lengthAdjust="spacingAndGlyphs">0.118559mohms</text><text x="589.3" y="609.0" textLength="60" lengthAdjust="spacingAndGlyphs">0.046878mohms</text><text x="628.9" y="609.0" textLength="60" lengthAdjust="spacingAndGlyphs">0.046878mohms</text><text x="668.5" y="609.0" textLength="60" lengthAdjust="spacingAndGlyphs">0.046878mohms</text><text x="787.2" y="609.0" textLength="60" lengthAdjust="spacingAndGlyphs">0.118559mohms</text><text x="826.8" y="609.0" textLength="60" lengthAdjust="spacingAndGlyphs">0.118559mohms</text><text x="312.2" y="648.0" textLength="60" lengthAdjust="spacingAndGlyphs">0.046878mohms</text><text x="351.8" y="648.0" textLength="60" lengthAdjust="spacingAndGlyphs">0.046878mohms</text><text x="391.4" y="648.0" textLength="60" lengthAdjust="spacingAndGlyphs">0.046878mohms</text><text x="470.5" y="648.0" textLength="60" lengthAdjust="spacingAndGlyphs">0.118559mohms</text><text x="510.1" y="648.0" textLength="60" lengthAdjust="spacingAndGlyphs">0.118559mohms</text><text x="589.3" y="648.0" textLength="60" lengthAdjust="spacingAndGlyphs">0.046878mohms</text><text x="628.9" y="648.0" textLength="60" lengthAdjust="spacingAndGlyphs">0.046878mohms</text><text x="668.5" y="648.0" textLength="60" lengthAdjust="spacingAndGlyphs">0.046878mohms</text><text x="787.2" y="648.0" textLength="60" lengthAdjust="spacingAndGlyphs">0.118559mohms</text><text x="826.8" y="648.0" textLength="60" lengthAdjust="spacingAndGlyphs">0.118559mohms</text><text x="272.6" y="688.0" textLength="60" lengthAdjust="spacingAndGlyphs">0.046878mohms</text><text x="470.5" y="688.0" textLength="43" lengthAdjust="spacingAndGlyphs">2.94mohms</text><text x="510.1" y="688.0" textLength="43" lengthAdjust="spacingAndGlyphs">2.94mohms</text><text x="549.7" y="688.0" textLength="43" lengthAdjust="spacingAndGlyphs">2.94mohms</text><text x="589.3" y="688.0" textLength="43" lengthAdjust="spacingAndGlyphs">2.94mohms</text><text x="628.9" y="688.0" textLength="43" lengthAdjust="spacingAndGlyphs">2.94mohms</text><text x="668.5" y="688.0" textLength="43" lengthAdjust="spacingAndGlyphs">2.94mohms</text><text x="787.2" y="688.0" textLength="60" lengthAdjust="spacingAndGlyphs">0.046878mohms</text><text x="866.4" y="688.0" textLength="60" lengthAdjust="spacingAndGlyphs">0.046878mohms</text><text x="549.7" y="727.0" textLength="43" lengthAdjust="spacingAndGlyphs">2.94mohms</text><text x="589.3" y="727.0" textLength="43" lengthAdjust="spacingAndGlyphs">2.94mohms</text></g>
<g shape-rendering="crispEdges"><rect x="14" y="26" width="59" height="738" fill="#ffffff"/><rect x="15" y="27" width="57" height="51" fill="rgb(255,0,0)"/><rect x="15" y="79" width="57" height="52" fill="rgb(255,72,0)"/><rect x="15" y="132" width="57" height="52" fill="rgb(255,144,0)"/><rect x="15" y="185" width="57" height="51" fill="rgb(255,216,0)"/><rect x="15" y="237" width="57" height="52" fill="rgb(216,255,0)"/><rect x="15" y="290" width="57" height="52" fill="rgb(144,255,0)"/><rect x="15" y="343" width="57" height="51" fill="rgb(72,255,0)"/><rect x="15" y="395" width="57" height="52" fill="rgb(0,255,0)"/><rect x="15" y="448" width="57" height="52" fill="rgb(0,255,72)"/><rect x="15" y="501" width="57" height="51" fill="rgb(0,255,144)"/><rect x="15" y="553" width="57" height="52" fill="rgb(0,255,216)"/><rect x="15" y="606" width="57" height="51" fill="rgb(0,216,255)"/><rect x="15" y="658" width="57" height="52" fill="rgb(0,144,255)"/><rect x="15" y="711" width="57" height="52" fill="rgb(0,72,255)"/></g>
<g font-family="Liberation Sans, sans-serif" font-size="11.6" font-weight="bold" fill="#000"><text x="82.6" y="27" letter-spacing="0.55">2.941</text><text x="115" y="27" textLength="34" lengthAdjust="spacingAndGlyphs" stroke="#000" stroke-width="0.35">mohms</text><text x="82.6" y="79" letter-spacing="0.55">2.735</text><text x="115" y="79" textLength="34" lengthAdjust="spacingAndGlyphs" stroke="#000" stroke-width="0.35">mohms</text><text x="82.6" y="132" letter-spacing="0.55">2.528</text><text x="115" y="132" textLength="34" lengthAdjust="spacingAndGlyphs" stroke="#000" stroke-width="0.35">mohms</text><text x="82.6" y="185" letter-spacing="0.55">2.321</text><text x="115" y="185" textLength="34" lengthAdjust="spacingAndGlyphs" stroke="#000" stroke-width="0.35">mohms</text><text x="82.6" y="237" letter-spacing="0.55">2.114</text><text x="115" y="237" textLength="34" lengthAdjust="spacingAndGlyphs" stroke="#000" stroke-width="0.35">mohms</text><text x="82.6" y="290" letter-spacing="0.55">1.908</text><text x="115" y="290" textLength="34" lengthAdjust="spacingAndGlyphs" stroke="#000" stroke-width="0.35">mohms</text><text x="82.6" y="343" letter-spacing="0.55">1.701</text><text x="115" y="343" textLength="34" lengthAdjust="spacingAndGlyphs" stroke="#000" stroke-width="0.35">mohms</text><text x="82.6" y="395" letter-spacing="0.55">1.494</text><text x="115" y="395" textLength="34" lengthAdjust="spacingAndGlyphs" stroke="#000" stroke-width="0.35">mohms</text><text x="82.6" y="448" letter-spacing="0.55">1.287</text><text x="115" y="448" textLength="34" lengthAdjust="spacingAndGlyphs" stroke="#000" stroke-width="0.35">mohms</text><text x="82.6" y="501" letter-spacing="0.55">1.081</text><text x="115" y="501" textLength="34" lengthAdjust="spacingAndGlyphs" stroke="#000" stroke-width="0.35">mohms</text><text x="82.6" y="553" letter-spacing="0.55">0.874</text><text x="115" y="553" textLength="34" lengthAdjust="spacingAndGlyphs" stroke="#000" stroke-width="0.35">mohms</text><text x="82.6" y="606" letter-spacing="0.55">0.667</text><text x="115" y="606" textLength="34" lengthAdjust="spacingAndGlyphs" stroke="#000" stroke-width="0.35">mohms</text><text x="82.6" y="658" letter-spacing="0.55">0.460</text><text x="115" y="658" textLength="34" lengthAdjust="spacingAndGlyphs" stroke="#000" stroke-width="0.35">mohms</text><text x="82.6" y="711" letter-spacing="0.55">0.254</text><text x="115" y="711" textLength="34" lengthAdjust="spacingAndGlyphs" stroke="#000" stroke-width="0.35">mohms</text><text x="82.6" y="764" letter-spacing="0.55">0.047</text><text x="115" y="764" textLength="34" lengthAdjust="spacingAndGlyphs" stroke="#000" stroke-width="0.35">mohms</text></g>
<g shape-rendering="crispEdges">
<rect x="0" y="0" width="1157" height="1" fill="#000"/><rect x="0" y="0" width="1" height="778" fill="#000"/>
<rect x="1" y="1" width="1155" height="1" fill="#a0a0a0"/><rect x="1" y="1" width="1" height="776" fill="#a0a0a0"/>
<rect x="2" y="2" width="1153" height="1" fill="#696969"/><rect x="2" y="2" width="1" height="774" fill="#696969"/>
<rect x="1156" y="0" width="1" height="778" fill="#000"/><rect x="0" y="777" width="1157" height="1" fill="#000"/>
<rect x="1155" y="1" width="1" height="776" fill="#fff"/><rect x="1" y="776" width="1155" height="1" fill="#fff"/>
<rect x="1154" y="2" width="1" height="774" fill="#e3e3e3"/><rect x="2" y="775" width="1153" height="1" fill="#e3e3e3"/>
</g>
</svg>
<div id="dlg">
<div class="title">CPA RL Plot Visibility (Pin Resistance Map)</div>
<svg class="x" width="11" height="11" viewBox="0 0 11 11"><path d="M0.5 0.5 L10 10 M10 0.5 L0.5 10" stroke="#6a6a6a" stroke-width="1"/></svg>
<div class="list">
 <div class="item" style="top:3px"><span class="cb"><svg width="13" height="13"><path d="M2.3 7.2 L5 10.1 L10.7 4.3" fill="none" stroke="#333" stroke-width="1.2"/></svg></span><span class="lbl">VDD</span></div>
 <div class="item" style="top:20px"><span class="cb"><svg width="13" height="13"><path d="M2.3 7.2 L5 10.1 L10.7 4.3" fill="none" stroke="#333" stroke-width="1.2"/></svg></span><span class="lbl">VDD_15</span></div>
 <div class="item" style="top:37px"><span class="cb"><svg width="13" height="13"><path d="M2.3 7.2 L5 10.1 L10.7 4.3" fill="none" stroke="#333" stroke-width="1.2"/></svg></span><span class="lbl">VSS</span></div>
</div>
<div class="btn" style="left:31px;top:421px;width:92px;height:19px">Select All</div>
<div class="btn" style="left:31px;top:450px;width:92px;height:19px">Unselect All</div>
<div class="btn" style="left:153px;top:423px;width:131px;height:19px">Update Plot Display</div>
<div class="cb2"></div>
<div class="sync">Synchronize Net Visibility</div>
</div>
</body></html>
